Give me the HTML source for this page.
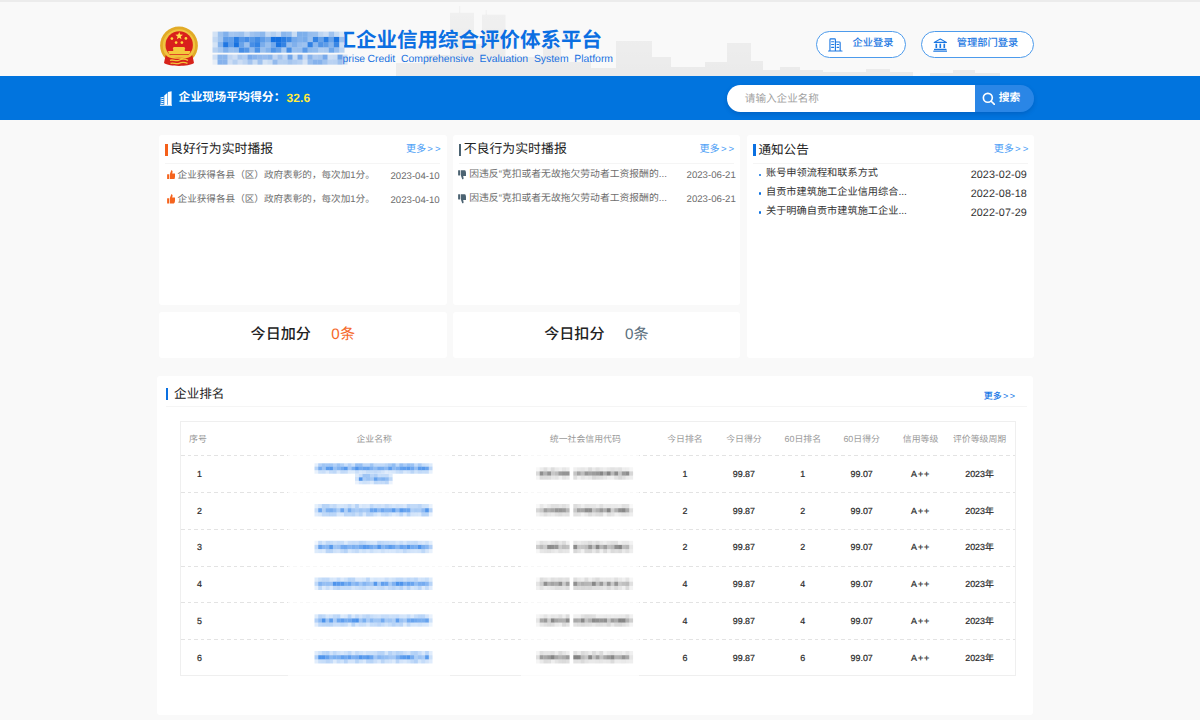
<!DOCTYPE html>
<html lang="zh-CN">
<head>
<meta charset="utf-8">
<title>Enterprise Credit Comprehensive Evaluation System Platform</title>
<style>
html,body{margin:0;padding:0}
body{width:1200px;height:720px;overflow:hidden;position:relative;background:#f9f9f9;
  font-family:"Liberation Sans",sans-serif;color:#333;font-size:9.4px;line-height:1;text-rendering:geometricPrecision}
ul{list-style:none;margin:0;padding:0}
svg{display:block}
.t{flex:none;display:inline-block;white-space:nowrap;line-height:1;font-weight:normal;font-family:"Liberation Sans","Noto Sans CJK SC",sans-serif}
.t.bd{font-weight:bold}
.t.md{font-weight:500}
svg.ic{flex:none}
svg.redact{position:absolute;pointer-events:none;filter:blur(.7px)}

/* ---------- top header ---------- */
.hd{position:absolute;left:0;top:0;width:1200px;height:76px;background:#f9f9f9;overflow:hidden}
.hd:before{content:"";position:absolute;left:0;top:0;width:100%;height:1.5px;background:#ececec}
.sky{position:absolute;left:0;top:0;width:1200px;height:76px}
.emblem{position:absolute;left:159px;top:25px;width:40px;height:42px}
.title{position:absolute;left:335.6px;top:31px;color:#0b6fe2;clip-path:inset(-2px -2px -2px 8.6px)}
.sub{position:absolute;left:342.6px;top:53.7px;font-size:10.4px;line-height:12px;color:#1871e0;white-space:nowrap;word-spacing:2.9px}
.btn{position:absolute;top:31.2px;height:26.8px;box-sizing:border-box;border:1px solid #4d9bec;border-radius:14px;
  background:#fff;display:flex;align-items:center;color:#1c78e2}
.btn svg.ic{width:14.6px;height:14px;stroke:#1c78e2;fill:none}
.b1{left:816.2px;width:89.8px;padding-left:11.2px}
.b1 .t{margin-left:9.6px}
.b2{left:920.6px;width:113.8px;padding-left:11.2px}
.b2 .t{margin-left:9.4px}

/* ---------- blue bar ---------- */
.bar{position:absolute;left:0;top:76px;width:1200px;height:44px;background:#0174de}
.score{position:absolute;left:160px;top:0;height:44px;display:flex;align-items:center;color:#fff}
.score svg.ic{width:12.4px;height:14.8px;margin-right:6.2px;margin-top:.6px}
.score b{font-size:12px;color:#ffec3d;margin-left:.9px;margin-top:.4px;letter-spacing:.1px}
.search{position:absolute;left:726.8px;top:8.8px;height:27px;width:307.6px;display:flex;border-radius:13.5px;
  box-shadow:0 2px 4px rgba(0,40,110,.22)}
.search .inp{width:248.2px;height:27px;background:#fff;border-radius:13.5px 0 0 13.5px;display:flex;align-items:center;
  padding-left:18px;padding-top:1.6px;box-sizing:border-box;color:#a2a2a2}
.search .go{flex:1;height:27px;background:#2a86e6;border-radius:0 13.5px 13.5px 0;display:flex;align-items:center;color:#fff;
  padding-left:6.6px;box-sizing:border-box}
.search .go svg.ic{width:13.6px;height:13.6px;margin-right:3.6px;margin-top:.4px}

/* ---------- panels ---------- */
.panel{position:absolute;background:#fff;border-radius:3px}
.ph{position:absolute;left:6px;right:6.6px;top:0;height:29.6px;box-sizing:border-box;padding-top:2.2px;
  border-bottom:1px solid #f5f5f5;display:flex;align-items:center;color:#222}
.ph i{display:block;width:2.7px;height:12.8px;margin-right:2.4px;flex:none;margin-top:.2px}
.more{margin-left:auto;display:flex;align-items:center;color:#4da0f6;font-size:9.6px;letter-spacing:2.1px;margin-right:-2.7px}
.more .t{margin-right:1.2px;letter-spacing:0}
.more span:not(.t){display:block;margin-top:-.2px}
.list{position:absolute;left:0;right:0}
.list li{display:flex;align-items:center;white-space:nowrap}
.list time{margin-left:auto;display:block}

.good{left:159px;top:134.5px;width:287.6px;height:170.3px}
.bad{left:452.6px;top:134.5px;width:287.6px;height:170.3px}
.good .list{top:28.9px;color:#6e6e6e}
.good .list li{height:24.3px;padding:0 6.9px 0 7.6px}
.good .list .t{margin-left:2.4px}
.good .list svg.ic{margin-top:-1.8px}
.bad .list{top:28.1px;color:#6e6e6e}
.bad .list li{height:24.3px;padding:0 4.4px 0 5.3px}
.bad .list .t{margin-left:2.8px}
.good time,.bad time{font-size:9.65px;color:#6b6b6b;margin-top:1.9px}

.notice{left:746.6px;top:134.5px;width:287.8px;height:223px}
.notice .ph{left:6.5px;right:6.6px}
.notice .ph i{width:2.8px;margin-right:2.5px}
.notice .list{top:30.4px;color:#333}
.notice .list li{height:18.8px;padding:0 7.6px 0 12.4px}
.notice .dot{display:block;width:2.3px;height:2.3px;border-radius:50%;background:#0a70e1;margin-right:4.7px;flex:none;margin-top:1px}
.notice time{font-size:10.8px;letter-spacing:.1px;margin-right:-.1px;color:#333;margin-top:3px}

.cnt{top:312px;width:287.6px;height:45.6px;display:flex;align-items:center;justify-content:center;color:#222}
.cnt .n{display:flex;align-items:center;margin-left:20.4px;font-size:15.2px}
.cnt .n .t{margin-left:.2px}
.c1{left:159px}.c1 .n{color:#f5692a}
.c2{left:452.6px}.c2 .n{color:#5b6f7d}

/* ---------- ranking ---------- */
.rank{left:156.8px;top:376.2px;width:876px;height:339px}
.rank .ph{left:9px;right:5.6px;height:30.6px;padding-top:6.8px}
.rank .ph i{width:2.6px;height:12.6px;margin-right:5.7px;margin-top:-.8px}
.rank .more{color:#1677e6;font-size:9px;letter-spacing:1.6px;margin-right:10.6px;margin-top:4.6px}
.tbl{position:absolute;left:23.2px;top:44.6px;width:836.4px;height:255.2px;box-sizing:border-box;border:1px solid #efefef}
table{border-collapse:collapse;table-layout:fixed;width:834.4px;font-size:8.9px;color:#333}
th,td{padding:0;text-align:center;font-weight:normal;vertical-align:middle}
th{height:33.5px;color:#999;padding-top:2.5px;box-sizing:border-box}
td{height:36.75px;padding-top:1.3px;box-sizing:border-box;color:#2c2c2c;-webkit-text-stroke:.22px #2c2c2c}
th .t,td .t{display:inline}
th:nth-child(1),td:nth-child(1){width:37px}
th:nth-child(2){width:312.4px}
th:nth-child(1){padding-right:3.2px}
th:nth-child(3){width:125.2px;padding-right:15.4px}
th:nth-child(n+4){width:58.9px}
th:nth-child(9){width:65.4px;padding-right:6.4px}
td:nth-child(9){padding-right:6.4px}
td.lv{letter-spacing:.9px}
.dash{position:absolute;left:0;width:100%;height:1px;
  background:repeating-linear-gradient(90deg,#e3e3e3 0,#e3e3e3 3.7px,transparent 3.7px,transparent 6.6px)}
.veil{position:absolute;background:rgba(255,255,255,.72)}
</style>
</head>
<body>

<header class="hd">
  <svg class="sky" viewBox="0 0 1200 76" aria-hidden="true" fill="url(#skyg)"><defs><linearGradient id="skyg" gradientUnits="userSpaceOnUse" x1="0" y1="6" x2="0" y2="76"><stop offset="0" stop-color="#000" stop-opacity=".035"/><stop offset="1" stop-color="#000" stop-opacity=".058"/></linearGradient></defs>
    <rect x="396" y="63" width="29" height="13"/><rect x="425" y="55" width="25" height="21"/>
    <rect x="459.200" y="6" width="1" height="7"/><rect x="450" y="12.800" width="24" height="63.200"/>
    <rect x="485.700" y="10" width="1" height="5"/><rect x="482" y="14.700" width="23.500" height="61.300"/>
    <rect x="474" y="44" width="8" height="32"/><rect x="505.500" y="57" width="37.500" height="19"/>
    <rect x="543" y="46" width="18" height="30"/><rect x="561" y="62" width="30" height="14"/>
    <rect x="591" y="68" width="25" height="8"/>
    <rect x="616" y="41" width="36" height="35"/><rect x="652" y="57" width="19" height="19"/>
    <rect x="671" y="67" width="34" height="9"/><rect x="705" y="62" width="22" height="14"/>
    <rect x="727" y="43" width="24" height="33"/><rect x="751" y="61" width="12" height="15"/>
    <rect x="763" y="70" width="60" height="6"/><rect x="780" y="67" width="20" height="3"/>
    <rect x="823" y="72" width="90" height="4"/><rect x="866" y="69" width="24" height="3"/>
    <rect x="930" y="73" width="70" height="3"/><rect x="953" y="70" width="22" height="3"/>
  </svg>
  <svg class="emblem" viewBox="0 0 40 42" role="img" aria-label="national emblem">
    <circle cx="20" cy="20.4" r="18.9" fill="#e2ab27"/>
    <circle cx="20" cy="20.4" r="16.2" fill="#f0c440"/>
    <circle cx="20.2" cy="19.9" r="13.7" fill="#d9201c"/><path d="M7.600 25.500a13.700 13.700 0 0 0 25.200 0l-1.800 4.200H9.400z" fill="#efc23c"/>
    <path d="M20.2 6.9l1 2.6 2.8.2-2.2 1.8.7 2.7-2.3-1.5-2.3 1.5.7-2.7-2.2-1.8 2.8-.2z" fill="#ffe24d"/>
    <g fill="#ffd93b"><circle cx="12.9" cy="13.6" r="1.35"/><circle cx="26.9" cy="13.4" r="1.35"/><circle cx="17.1" cy="17.6" r="1.35"/><circle cx="22.9" cy="17.6" r="1.35"/></g>
    <path d="M14.6 21.9h10.8l.9 2H13.700zM14.200 23.900h11.600v2.200H14.200zM9 26.100h22.400l-1 2.800H10z" fill="#f4c93c"/>
    <path d="M6.600 30.200c4 3.200 22.800 3.200 26.800 0l1.600 7.900c-5.500 3.800-24.500 3.800-30 0z" fill="#d7231b"/>
    <path d="M8.400 30.600c5 3.400 18.200 3.400 23.200 0M11 35.400c3-1.600 5.600 1.600 9-.2s6-1.400 9 .2M11.500 38.400c3-1.400 5.500 1.200 8.500-.1s5.500-1.300 8.500.1" fill="none" stroke="#f2c53a" stroke-width="1.3"/>
  </svg>
  <div class="title"><span class="t bd" style="font-size:20.5px;">工企业信用综合评价体系平台</span></div>
  <div class="sub"><span style="margin-right:-3.4px">prise</span> Credit Comprehensive Evaluation System Platform</div>
  <svg class="redact" style="left:0;top:0;width:360px;height:76px" viewBox="0 0 360 76"><rect x="212.5" y="31.6" width="5.33" height="5.30" fill="rgb(20,112,224)" fill-opacity="0.17"/><rect x="217.8" y="31.6" width="5.33" height="5.30" fill="rgb(20,112,224)" fill-opacity="0.40"/><rect x="223.1" y="31.6" width="5.33" height="5.30" fill="rgb(20,112,224)" fill-opacity="0.53"/><rect x="228.3" y="31.6" width="5.33" height="5.30" fill="rgb(20,112,224)" fill-opacity="0.37"/><rect x="233.6" y="31.6" width="5.33" height="5.30" fill="rgb(20,112,224)" fill-opacity="0.39"/><rect x="238.9" y="31.6" width="5.33" height="5.30" fill="rgb(20,112,224)" fill-opacity="0.41"/><rect x="244.2" y="31.6" width="5.33" height="5.30" fill="rgb(20,112,224)" fill-opacity="0.27"/><rect x="249.5" y="31.6" width="5.33" height="5.30" fill="rgb(20,112,224)" fill-opacity="0.39"/><rect x="254.7" y="31.6" width="5.33" height="5.30" fill="rgb(20,112,224)" fill-opacity="0.43"/><rect x="260.0" y="31.6" width="5.33" height="5.30" fill="rgb(20,112,224)" fill-opacity="0.48"/><rect x="265.3" y="31.6" width="5.33" height="5.30" fill="rgb(20,112,224)" fill-opacity="0.24"/><rect x="270.6" y="31.6" width="5.33" height="5.30" fill="rgb(20,112,224)" fill-opacity="0.31"/><rect x="275.9" y="31.6" width="5.33" height="5.30" fill="rgb(20,112,224)" fill-opacity="0.23"/><rect x="281.1" y="31.6" width="5.33" height="5.30" fill="rgb(20,112,224)" fill-opacity="0.49"/><rect x="286.4" y="31.6" width="5.33" height="5.30" fill="rgb(20,112,224)" fill-opacity="0.45"/><rect x="291.7" y="31.6" width="5.33" height="5.30" fill="rgb(20,112,224)" fill-opacity="0.21"/><rect x="297.0" y="31.6" width="5.33" height="5.30" fill="rgb(20,112,224)" fill-opacity="0.54"/><rect x="302.3" y="31.6" width="5.33" height="5.30" fill="rgb(20,112,224)" fill-opacity="0.54"/><rect x="307.5" y="31.6" width="5.33" height="5.30" fill="rgb(20,112,224)" fill-opacity="0.44"/><rect x="312.8" y="31.6" width="5.33" height="5.30" fill="rgb(20,112,224)" fill-opacity="0.42"/><rect x="318.1" y="31.6" width="5.33" height="5.30" fill="rgb(20,112,224)" fill-opacity="0.26"/><rect x="323.4" y="31.6" width="5.33" height="5.30" fill="rgb(20,112,224)" fill-opacity="0.20"/><rect x="328.7" y="31.6" width="5.33" height="5.30" fill="rgb(20,112,224)" fill-opacity="0.39"/><rect x="333.9" y="31.6" width="5.33" height="5.30" fill="rgb(20,112,224)" fill-opacity="0.22"/><rect x="339.2" y="31.6" width="5.33" height="5.30" fill="rgb(20,112,224)" fill-opacity="0.12"/><rect x="212.5" y="36.9" width="5.33" height="5.30" fill="rgb(20,112,224)" fill-opacity="0.24"/><rect x="217.8" y="36.9" width="5.33" height="5.30" fill="rgb(20,112,224)" fill-opacity="0.38"/><rect x="223.1" y="36.9" width="5.33" height="5.30" fill="rgb(20,112,224)" fill-opacity="0.68"/><rect x="228.3" y="36.9" width="5.33" height="5.30" fill="rgb(20,112,224)" fill-opacity="0.66"/><rect x="233.6" y="36.9" width="5.33" height="5.30" fill="rgb(20,112,224)" fill-opacity="0.91"/><rect x="238.9" y="36.9" width="5.33" height="5.30" fill="rgb(20,112,224)" fill-opacity="0.71"/><rect x="244.2" y="36.9" width="5.33" height="5.30" fill="rgb(20,112,224)" fill-opacity="0.79"/><rect x="249.5" y="36.9" width="5.33" height="5.30" fill="rgb(20,112,224)" fill-opacity="0.70"/><rect x="254.7" y="36.9" width="5.33" height="5.30" fill="rgb(20,112,224)" fill-opacity="0.80"/><rect x="260.0" y="36.9" width="5.33" height="5.30" fill="rgb(20,112,224)" fill-opacity="0.67"/><rect x="265.3" y="36.9" width="5.33" height="5.30" fill="rgb(20,112,224)" fill-opacity="0.56"/><rect x="270.6" y="36.9" width="5.33" height="5.30" fill="rgb(20,112,224)" fill-opacity="1.00"/><rect x="275.9" y="36.9" width="5.33" height="5.30" fill="rgb(20,112,224)" fill-opacity="1.00"/><rect x="281.1" y="36.9" width="5.33" height="5.30" fill="rgb(20,112,224)" fill-opacity="0.91"/><rect x="286.4" y="36.9" width="5.33" height="5.30" fill="rgb(20,112,224)" fill-opacity="0.83"/><rect x="291.7" y="36.9" width="5.33" height="5.30" fill="rgb(20,112,224)" fill-opacity="0.58"/><rect x="297.0" y="36.9" width="5.33" height="5.30" fill="rgb(20,112,224)" fill-opacity="0.52"/><rect x="302.3" y="36.9" width="5.33" height="5.30" fill="rgb(20,112,224)" fill-opacity="0.56"/><rect x="307.5" y="36.9" width="5.33" height="5.30" fill="rgb(20,112,224)" fill-opacity="0.41"/><rect x="312.8" y="36.9" width="5.33" height="5.30" fill="rgb(20,112,224)" fill-opacity="0.86"/><rect x="318.1" y="36.9" width="5.33" height="5.30" fill="rgb(20,112,224)" fill-opacity="0.64"/><rect x="323.4" y="36.9" width="5.33" height="5.30" fill="rgb(20,112,224)" fill-opacity="0.91"/><rect x="328.7" y="36.9" width="5.33" height="5.30" fill="rgb(20,112,224)" fill-opacity="0.63"/><rect x="333.9" y="36.9" width="5.33" height="5.30" fill="rgb(20,112,224)" fill-opacity="0.98"/><rect x="339.2" y="36.9" width="5.33" height="5.30" fill="rgb(20,112,224)" fill-opacity="0.41"/><rect x="212.5" y="42.1" width="5.33" height="5.30" fill="rgb(20,112,224)" fill-opacity="0.16"/><rect x="217.8" y="42.1" width="5.33" height="5.30" fill="rgb(20,112,224)" fill-opacity="0.51"/><rect x="223.1" y="42.1" width="5.33" height="5.30" fill="rgb(20,112,224)" fill-opacity="0.95"/><rect x="228.3" y="42.1" width="5.33" height="5.30" fill="rgb(20,112,224)" fill-opacity="0.68"/><rect x="233.6" y="42.1" width="5.33" height="5.30" fill="rgb(20,112,224)" fill-opacity="0.99"/><rect x="238.9" y="42.1" width="5.33" height="5.30" fill="rgb(20,112,224)" fill-opacity="0.63"/><rect x="244.2" y="42.1" width="5.33" height="5.30" fill="rgb(20,112,224)" fill-opacity="0.41"/><rect x="249.5" y="42.1" width="5.33" height="5.30" fill="rgb(20,112,224)" fill-opacity="0.78"/><rect x="254.7" y="42.1" width="5.33" height="5.30" fill="rgb(20,112,224)" fill-opacity="0.87"/><rect x="260.0" y="42.1" width="5.33" height="5.30" fill="rgb(20,112,224)" fill-opacity="0.55"/><rect x="265.3" y="42.1" width="5.33" height="5.30" fill="rgb(20,112,224)" fill-opacity="0.42"/><rect x="270.6" y="42.1" width="5.33" height="5.30" fill="rgb(20,112,224)" fill-opacity="0.59"/><rect x="275.9" y="42.1" width="5.33" height="5.30" fill="rgb(20,112,224)" fill-opacity="0.98"/><rect x="281.1" y="42.1" width="5.33" height="5.30" fill="rgb(20,112,224)" fill-opacity="0.86"/><rect x="286.4" y="42.1" width="5.33" height="5.30" fill="rgb(20,112,224)" fill-opacity="0.44"/><rect x="291.7" y="42.1" width="5.33" height="5.30" fill="rgb(20,112,224)" fill-opacity="0.53"/><rect x="297.0" y="42.1" width="5.33" height="5.30" fill="rgb(20,112,224)" fill-opacity="0.43"/><rect x="302.3" y="42.1" width="5.33" height="5.30" fill="rgb(20,112,224)" fill-opacity="0.40"/><rect x="307.5" y="42.1" width="5.33" height="5.30" fill="rgb(20,112,224)" fill-opacity="0.88"/><rect x="312.8" y="42.1" width="5.33" height="5.30" fill="rgb(20,112,224)" fill-opacity="0.49"/><rect x="318.1" y="42.1" width="5.33" height="5.30" fill="rgb(20,112,224)" fill-opacity="0.74"/><rect x="323.4" y="42.1" width="5.33" height="5.30" fill="rgb(20,112,224)" fill-opacity="0.67"/><rect x="328.7" y="42.1" width="5.33" height="5.30" fill="rgb(20,112,224)" fill-opacity="0.50"/><rect x="333.9" y="42.1" width="5.33" height="5.30" fill="rgb(20,112,224)" fill-opacity="0.84"/><rect x="339.2" y="42.1" width="5.33" height="5.30" fill="rgb(20,112,224)" fill-opacity="0.20"/><rect x="212.5" y="47.4" width="5.33" height="5.30" fill="rgb(20,112,224)" fill-opacity="0.28"/><rect x="217.8" y="47.4" width="5.33" height="5.30" fill="rgb(20,112,224)" fill-opacity="0.36"/><rect x="223.1" y="47.4" width="5.33" height="5.30" fill="rgb(20,112,224)" fill-opacity="0.52"/><rect x="228.3" y="47.4" width="5.33" height="5.30" fill="rgb(20,112,224)" fill-opacity="0.41"/><rect x="233.6" y="47.4" width="5.33" height="5.30" fill="rgb(20,112,224)" fill-opacity="0.44"/><rect x="238.9" y="47.4" width="5.33" height="5.30" fill="rgb(20,112,224)" fill-opacity="0.79"/><rect x="244.2" y="47.4" width="5.33" height="5.30" fill="rgb(20,112,224)" fill-opacity="0.71"/><rect x="249.5" y="47.4" width="5.33" height="5.30" fill="rgb(20,112,224)" fill-opacity="0.46"/><rect x="254.7" y="47.4" width="5.33" height="5.30" fill="rgb(20,112,224)" fill-opacity="0.75"/><rect x="260.0" y="47.4" width="5.33" height="5.30" fill="rgb(20,112,224)" fill-opacity="0.41"/><rect x="265.3" y="47.4" width="5.33" height="5.30" fill="rgb(20,112,224)" fill-opacity="0.51"/><rect x="270.6" y="47.4" width="5.33" height="5.30" fill="rgb(20,112,224)" fill-opacity="0.73"/><rect x="275.9" y="47.4" width="5.33" height="5.30" fill="rgb(20,112,224)" fill-opacity="0.63"/><rect x="281.1" y="47.4" width="5.33" height="5.30" fill="rgb(20,112,224)" fill-opacity="0.35"/><rect x="286.4" y="47.4" width="5.33" height="5.30" fill="rgb(20,112,224)" fill-opacity="0.79"/><rect x="291.7" y="47.4" width="5.33" height="5.30" fill="rgb(20,112,224)" fill-opacity="0.41"/><rect x="297.0" y="47.4" width="5.33" height="5.30" fill="rgb(20,112,224)" fill-opacity="0.43"/><rect x="302.3" y="47.4" width="5.33" height="5.30" fill="rgb(20,112,224)" fill-opacity="0.69"/><rect x="307.5" y="47.4" width="5.33" height="5.30" fill="rgb(20,112,224)" fill-opacity="0.47"/><rect x="312.8" y="47.4" width="5.33" height="5.30" fill="rgb(20,112,224)" fill-opacity="0.45"/><rect x="318.1" y="47.4" width="5.33" height="5.30" fill="rgb(20,112,224)" fill-opacity="0.33"/><rect x="323.4" y="47.4" width="5.33" height="5.30" fill="rgb(20,112,224)" fill-opacity="0.34"/><rect x="328.7" y="47.4" width="5.33" height="5.30" fill="rgb(20,112,224)" fill-opacity="0.60"/><rect x="333.9" y="47.4" width="5.33" height="5.30" fill="rgb(20,112,224)" fill-opacity="0.43"/><rect x="339.2" y="47.4" width="5.33" height="5.30" fill="rgb(20,112,224)" fill-opacity="0.27"/><rect x="212.5" y="54.6" width="5.05" height="5.05" fill="rgb(40,120,225)" fill-opacity="0.20"/><rect x="217.5" y="54.6" width="5.05" height="5.05" fill="rgb(40,120,225)" fill-opacity="0.53"/><rect x="222.5" y="54.6" width="5.05" height="5.05" fill="rgb(40,120,225)" fill-opacity="0.53"/><rect x="227.5" y="54.6" width="5.05" height="5.05" fill="rgb(40,120,225)" fill-opacity="0.27"/><rect x="232.5" y="54.6" width="5.05" height="5.05" fill="rgb(40,120,225)" fill-opacity="0.21"/><rect x="237.5" y="54.6" width="5.05" height="5.05" fill="rgb(40,120,225)" fill-opacity="0.39"/><rect x="242.5" y="54.6" width="5.05" height="5.05" fill="rgb(40,120,225)" fill-opacity="0.34"/><rect x="247.5" y="54.6" width="5.05" height="5.05" fill="rgb(40,120,225)" fill-opacity="0.61"/><rect x="252.5" y="54.6" width="5.05" height="5.05" fill="rgb(40,120,225)" fill-opacity="0.55"/><rect x="257.5" y="54.6" width="5.05" height="5.05" fill="rgb(40,120,225)" fill-opacity="0.50"/><rect x="262.5" y="54.6" width="5.05" height="5.05" fill="rgb(40,120,225)" fill-opacity="0.48"/><rect x="267.5" y="54.6" width="5.05" height="5.05" fill="rgb(40,120,225)" fill-opacity="0.53"/><rect x="272.5" y="54.6" width="5.05" height="5.05" fill="rgb(40,120,225)" fill-opacity="0.27"/><rect x="277.5" y="54.6" width="5.05" height="5.05" fill="rgb(40,120,225)" fill-opacity="0.42"/><rect x="282.5" y="54.6" width="5.05" height="5.05" fill="rgb(40,120,225)" fill-opacity="0.28"/><rect x="287.5" y="54.6" width="5.05" height="5.05" fill="rgb(40,120,225)" fill-opacity="0.65"/><rect x="292.5" y="54.6" width="5.05" height="5.05" fill="rgb(40,120,225)" fill-opacity="0.23"/><rect x="297.5" y="54.6" width="5.05" height="5.05" fill="rgb(40,120,225)" fill-opacity="0.61"/><rect x="302.5" y="54.6" width="5.05" height="5.05" fill="rgb(40,120,225)" fill-opacity="0.24"/><rect x="307.5" y="54.6" width="5.05" height="5.05" fill="rgb(40,120,225)" fill-opacity="0.54"/><rect x="312.5" y="54.6" width="5.05" height="5.05" fill="rgb(40,120,225)" fill-opacity="0.37"/><rect x="317.5" y="54.6" width="5.05" height="5.05" fill="rgb(40,120,225)" fill-opacity="0.40"/><rect x="322.5" y="54.6" width="5.05" height="5.05" fill="rgb(40,120,225)" fill-opacity="0.62"/><rect x="327.5" y="54.6" width="5.05" height="5.05" fill="rgb(40,120,225)" fill-opacity="0.21"/><rect x="332.5" y="54.6" width="5.05" height="5.05" fill="rgb(40,120,225)" fill-opacity="0.23"/><rect x="337.5" y="54.6" width="5.05" height="5.05" fill="rgb(40,120,225)" fill-opacity="0.66"/><rect x="342.5" y="54.6" width="5.05" height="5.05" fill="rgb(40,120,225)" fill-opacity="0.20"/><rect x="212.5" y="59.6" width="5.05" height="5.05" fill="rgb(40,120,225)" fill-opacity="0.09"/><rect x="217.5" y="59.6" width="5.05" height="5.05" fill="rgb(40,120,225)" fill-opacity="0.55"/><rect x="222.5" y="59.6" width="5.05" height="5.05" fill="rgb(40,120,225)" fill-opacity="0.54"/><rect x="227.5" y="59.6" width="5.05" height="5.05" fill="rgb(40,120,225)" fill-opacity="0.21"/><rect x="232.5" y="59.6" width="5.05" height="5.05" fill="rgb(40,120,225)" fill-opacity="0.33"/><rect x="237.5" y="59.6" width="5.05" height="5.05" fill="rgb(40,120,225)" fill-opacity="0.21"/><rect x="242.5" y="59.6" width="5.05" height="5.05" fill="rgb(40,120,225)" fill-opacity="0.29"/><rect x="247.5" y="59.6" width="5.05" height="5.05" fill="rgb(40,120,225)" fill-opacity="0.41"/><rect x="252.5" y="59.6" width="5.05" height="5.05" fill="rgb(40,120,225)" fill-opacity="0.23"/><rect x="257.5" y="59.6" width="5.05" height="5.05" fill="rgb(40,120,225)" fill-opacity="0.44"/><rect x="262.5" y="59.6" width="5.05" height="5.05" fill="rgb(40,120,225)" fill-opacity="0.18"/><rect x="267.5" y="59.6" width="5.05" height="5.05" fill="rgb(40,120,225)" fill-opacity="0.23"/><rect x="272.5" y="59.6" width="5.05" height="5.05" fill="rgb(40,120,225)" fill-opacity="0.49"/><rect x="277.5" y="59.6" width="5.05" height="5.05" fill="rgb(40,120,225)" fill-opacity="0.32"/><rect x="282.5" y="59.6" width="5.05" height="5.05" fill="rgb(40,120,225)" fill-opacity="0.33"/><rect x="287.5" y="59.6" width="5.05" height="5.05" fill="rgb(40,120,225)" fill-opacity="0.40"/><rect x="292.5" y="59.6" width="5.05" height="5.05" fill="rgb(40,120,225)" fill-opacity="0.35"/><rect x="297.5" y="59.6" width="5.05" height="5.05" fill="rgb(40,120,225)" fill-opacity="0.31"/><rect x="302.5" y="59.6" width="5.05" height="5.05" fill="rgb(40,120,225)" fill-opacity="0.17"/><rect x="307.5" y="59.6" width="5.05" height="5.05" fill="rgb(40,120,225)" fill-opacity="0.45"/><rect x="312.5" y="59.6" width="5.05" height="5.05" fill="rgb(40,120,225)" fill-opacity="0.55"/><rect x="317.5" y="59.6" width="5.05" height="5.05" fill="rgb(40,120,225)" fill-opacity="0.55"/><rect x="322.5" y="59.6" width="5.05" height="5.05" fill="rgb(40,120,225)" fill-opacity="0.43"/><rect x="327.5" y="59.6" width="5.05" height="5.05" fill="rgb(40,120,225)" fill-opacity="0.30"/><rect x="332.5" y="59.6" width="5.05" height="5.05" fill="rgb(40,120,225)" fill-opacity="0.31"/><rect x="337.5" y="59.6" width="5.05" height="5.05" fill="rgb(40,120,225)" fill-opacity="0.44"/><rect x="342.5" y="59.6" width="5.05" height="5.05" fill="rgb(40,120,225)" fill-opacity="0.19"/></svg>
  <a class="btn b1">
    <svg class="ic" viewBox="0 0 15 14" stroke-width="1.15" stroke-linecap="round" stroke-linejoin="round" aria-hidden="true">
      <path d="M2 13V1.500q0-.8.800-.8h4q.8 0 .8.800V13M7.600 3.900h4.100q.8 0 .8.800V13M.6 13.200h13.800"/>
      <path d="M3.700 3.600h2.200M3.700 6.500h2.200M3.700 9.400h2.200M9.300 6.500h1.600M9.300 9.400h1.600"/>
    </svg><span class="t md" style="font-size:10.25px;">企业登录</span></a>
  <a class="btn b2">
    <svg class="ic" viewBox="0 0 15 14" stroke-width="1.15" stroke-linecap="round" stroke-linejoin="round" aria-hidden="true">
      <path d="M7.500.8 13.800 4.300H1.200zM1.600 11.500h11.800M.8 13.300h13.400"/>
      <path d="M3.400 5.800v4.300M7.500 5.800v4.300M11.600 5.800v4.300" stroke-width="1.7" stroke-linecap="butt"/>
    </svg><span class="t md" style="font-size:10.25px;">管理部门登录</span></a>
</header>

<div class="bar">
  <div class="score">
    <svg class="ic" viewBox="0 0 12.400 14.800" fill="#fff" aria-hidden="true">
      <path d="M7.900.9 11.600.2V14H7.900zM4.300 4.500 7.300 2V14H4.300zM0 13.700h12.400v1H0z"/>
      <path d="M.5 6.600 3.700 5.800v1L.5 7.600zM.5 8.500l3.200-.7v1L.5 9.500zM.5 10.400l3.200-.6v1l-3.200.6zM.5 12.300l3.200-.5v1l-3.200.5z"/>
    </svg>
    <span class="t bd" style="font-size:11.9px;">企业现场平均得分：</span><b>32.6</b>
  </div>
  <div class="search">
    <div class="inp"><span class="t" style="font-size:10.6px;">请输入企业名称</span></div>
    <div class="go">
      <svg class="ic" viewBox="0 0 14 14" fill="none" stroke="#fff" stroke-width="1.7" stroke-linecap="round" aria-hidden="true">
        <circle cx="6" cy="6" r="4.600"/><path d="M9.500 9.500 12.800 12.800"/>
      </svg><span class="t bd" style="font-size:10.8px;">搜索</span></div>
  </div>
</div>

<main>
  <section class="panel good">
    <div class="ph"><i style="background:#f5601a"></i><span class="t" style="font-size:12.9px;">良好行为实时播报</span><a class="more"><span class="t" style="font-size:10.1px;">更多</span><span>&gt;&gt;</span></a></div>
    <ul class="list">
<li><svg class="ic" viewBox="0.4 0.8 15.4 14.8" preserveAspectRatio="none" style="width:8.6px;height:9.6px;" fill="#f5641e"><rect x="0.6" y="7.2" width="3.6" height="8.2" rx=".5"/><path d="M5.4 7.4 8.1 1c1.7-.1 2.6 1.2 2.2 2.8L9.7 6.3h4.2c1.2 0 1.9 1 1.6 2.1l-1.4 5.7c-.2.8-.8 1.3-1.6 1.3H5.4z"/></svg><span class="t lt" style="font-size:9.6px;">企业获得各县（区）政府表彰的，每次加1分。</span><time>2023-04-10</time></li>
<li><svg class="ic" viewBox="0.4 0.8 15.4 14.8" preserveAspectRatio="none" style="width:8.6px;height:9.6px;" fill="#f5641e"><rect x="0.6" y="7.2" width="3.6" height="8.2" rx=".5"/><path d="M5.4 7.4 8.1 1c1.7-.1 2.6 1.2 2.2 2.8L9.7 6.3h4.2c1.2 0 1.9 1 1.6 2.1l-1.4 5.7c-.2.8-.8 1.3-1.6 1.3H5.4z"/></svg><span class="t lt" style="font-size:9.6px;">企业获得各县（区）政府表彰的，每次加1分。</span><time>2023-04-10</time></li>
    </ul>
  </section>
  <section class="panel bad">
    <div class="ph"><i style="background:#4c6372"></i><span class="t" style="font-size:12.9px;">不良行为实时播报</span><a class="more"><span class="t" style="font-size:10.1px;">更多</span><span>&gt;&gt;</span></a></div>
    <ul class="list">
<li><svg class="ic" viewBox="0.4 0.8 15.4 14.8" preserveAspectRatio="none" style="width:8.6px;height:9.6px;transform:scaleY(-1);" fill="#4c6372"><rect x="0.6" y="7.2" width="3.6" height="8.2" rx=".5"/><path d="M5.4 7.4 8.1 1c1.7-.1 2.6 1.2 2.2 2.8L9.7 6.3h4.2c1.2 0 1.9 1 1.6 2.1l-1.4 5.7c-.2.8-.8 1.3-1.6 1.3H5.4z"/></svg><span class="t lt" style="font-size:9.8px;">因违反“克扣或者无故拖欠劳动者工资报酬的...</span><time>2023-06-21</time></li>
<li><svg class="ic" viewBox="0.4 0.8 15.4 14.8" preserveAspectRatio="none" style="width:8.6px;height:9.6px;transform:scaleY(-1);" fill="#4c6372"><rect x="0.6" y="7.2" width="3.6" height="8.2" rx=".5"/><path d="M5.4 7.4 8.1 1c1.7-.1 2.6 1.2 2.2 2.8L9.7 6.3h4.2c1.2 0 1.9 1 1.6 2.1l-1.4 5.7c-.2.8-.8 1.3-1.6 1.3H5.4z"/></svg><span class="t lt" style="font-size:9.8px;">因违反“克扣或者无故拖欠劳动者工资报酬的...</span><time>2023-06-21</time></li>
    </ul>
  </section>
  <section class="panel notice">
    <div class="ph"><i style="background:#0a70e1"></i><span class="t" style="font-size:12.6px;">通知公告</span><a class="more"><span class="t" style="font-size:10.1px;">更多</span><span>&gt;&gt;</span></a></div>
    <ul class="list">
<li><i class="dot"></i><span class="t lt" style="font-size:10.2px;">账号申领流程和联系方式</span><time>2023-02-09</time></li>
<li><i class="dot"></i><span class="t lt" style="font-size:10.2px;">自贡市建筑施工企业信用综合...</span><time>2022-08-18</time></li>
<li><i class="dot"></i><span class="t lt" style="font-size:10.2px;">关于明确自贡市建筑施工企业...</span><time>2022-07-29</time></li>
    </ul>
  </section>
  <section class="panel cnt c1"><span class="t md" style="font-size:15.1px;">今日加分</span><span class="n">0<span class="t" style="font-size:15.1px;">条</span></span></section>
  <section class="panel cnt c2"><span class="t md" style="font-size:15.1px;">今日扣分</span><span class="n">0<span class="t" style="font-size:15.1px;">条</span></span></section>

  <section class="panel rank">
    <div class="ph"><i style="background:#0a70e1"></i><span class="t" style="font-size:12.6px;">企业排名</span><a class="more"><span class="t md" style="font-size:9px;">更多</span><span>&gt;&gt;</span></a></div>
    <div class="tbl">
      <table><thead><tr><th><span class="t" style="font-size:8.9px;">序号</span></th><th><span class="t" style="font-size:8.9px;">企业名称</span></th><th><span class="t" style="font-size:8.9px;">统一社会信用代码</span></th><th><span class="t" style="font-size:8.9px;">今日排名</span></th><th><span class="t" style="font-size:8.9px;">今日得分</span></th><th><span class="t" style="font-size:8.9px;">60日排名</span></th><th><span class="t" style="font-size:8.9px;">60日得分</span></th><th><span class="t" style="font-size:8.9px;">信用等级</span></th><th><span class="t" style="font-size:8.9px;">评价等级周期</span></th></tr></thead><tbody><tr><td>1</td><td></td><td></td><td>1</td><td>99.87</td><td>1</td><td>99.07</td><td class="lv">A++</td><td>2023<span class="t" style="font-size:8.9px;">年</span></td></tr>
<tr><td>2</td><td></td><td></td><td>2</td><td>99.87</td><td>2</td><td>99.07</td><td class="lv">A++</td><td>2023<span class="t" style="font-size:8.9px;">年</span></td></tr>
<tr><td>3</td><td></td><td></td><td>2</td><td>99.87</td><td>2</td><td>99.07</td><td class="lv">A++</td><td>2023<span class="t" style="font-size:8.9px;">年</span></td></tr>
<tr><td>4</td><td></td><td></td><td>4</td><td>99.87</td><td>4</td><td>99.07</td><td class="lv">A++</td><td>2023<span class="t" style="font-size:8.9px;">年</span></td></tr>
<tr><td>5</td><td></td><td></td><td>4</td><td>99.87</td><td>4</td><td>99.07</td><td class="lv">A++</td><td>2023<span class="t" style="font-size:8.9px;">年</span></td></tr>
<tr><td>6</td><td></td><td></td><td>6</td><td>99.87</td><td>6</td><td>99.07</td><td class="lv">A++</td><td>2023<span class="t" style="font-size:8.9px;">年</span></td></tr></tbody></table>
      <div class="dash" style="top:33.5px"></div><div class="dash" style="top:70.25px"></div>
      <div class="dash" style="top:107px"></div><div class="dash" style="top:143.75px"></div>
      <div class="dash" style="top:180.5px"></div><div class="dash" style="top:217.25px"></div>
      <div class="veil" style="left:107px;top:30px;width:162px;height:226px"></div>
      <div class="veil" style="left:340px;top:30px;width:118px;height:226px"></div>
    </div>
  </section>
</main>
<svg class="redact" style="left:0;top:0;width:1200px;height:720px" viewBox="0 0 1200 720"><rect x="314.5" y="463.3" width="3.74" height="3.52" fill="rgb(45,128,232)" fill-opacity="0.13"/><rect x="318.2" y="463.3" width="3.74" height="3.52" fill="rgb(45,128,232)" fill-opacity="0.37"/><rect x="321.9" y="463.3" width="3.74" height="3.52" fill="rgb(45,128,232)" fill-opacity="0.46"/><rect x="325.6" y="463.3" width="3.74" height="3.52" fill="rgb(45,128,232)" fill-opacity="0.44"/><rect x="329.2" y="463.3" width="3.74" height="3.52" fill="rgb(45,128,232)" fill-opacity="0.45"/><rect x="332.9" y="463.3" width="3.74" height="3.52" fill="rgb(45,128,232)" fill-opacity="0.36"/><rect x="336.6" y="463.3" width="3.74" height="3.52" fill="rgb(45,128,232)" fill-opacity="0.47"/><rect x="340.3" y="463.3" width="3.74" height="3.52" fill="rgb(45,128,232)" fill-opacity="0.39"/><rect x="344.0" y="463.3" width="3.74" height="3.52" fill="rgb(45,128,232)" fill-opacity="0.26"/><rect x="347.7" y="463.3" width="3.74" height="3.52" fill="rgb(45,128,232)" fill-opacity="0.37"/><rect x="351.4" y="463.3" width="3.74" height="3.52" fill="rgb(45,128,232)" fill-opacity="0.25"/><rect x="355.1" y="463.3" width="3.74" height="3.52" fill="rgb(45,128,232)" fill-opacity="0.51"/><rect x="358.8" y="463.3" width="3.74" height="3.52" fill="rgb(45,128,232)" fill-opacity="0.51"/><rect x="362.4" y="463.3" width="3.74" height="3.52" fill="rgb(45,128,232)" fill-opacity="0.33"/><rect x="366.1" y="463.3" width="3.74" height="3.52" fill="rgb(45,128,232)" fill-opacity="0.33"/><rect x="369.8" y="463.3" width="3.74" height="3.52" fill="rgb(45,128,232)" fill-opacity="0.46"/><rect x="373.5" y="463.3" width="3.74" height="3.52" fill="rgb(45,128,232)" fill-opacity="0.30"/><rect x="377.2" y="463.3" width="3.74" height="3.52" fill="rgb(45,128,232)" fill-opacity="0.29"/><rect x="380.9" y="463.3" width="3.74" height="3.52" fill="rgb(45,128,232)" fill-opacity="0.29"/><rect x="384.6" y="463.3" width="3.74" height="3.52" fill="rgb(45,128,232)" fill-opacity="0.34"/><rect x="388.2" y="463.3" width="3.74" height="3.52" fill="rgb(45,128,232)" fill-opacity="0.42"/><rect x="391.9" y="463.3" width="3.74" height="3.52" fill="rgb(45,128,232)" fill-opacity="0.52"/><rect x="395.6" y="463.3" width="3.74" height="3.52" fill="rgb(45,128,232)" fill-opacity="0.30"/><rect x="399.3" y="463.3" width="3.74" height="3.52" fill="rgb(45,128,232)" fill-opacity="0.51"/><rect x="403.0" y="463.3" width="3.74" height="3.52" fill="rgb(45,128,232)" fill-opacity="0.40"/><rect x="406.7" y="463.3" width="3.74" height="3.52" fill="rgb(45,128,232)" fill-opacity="0.50"/><rect x="410.4" y="463.3" width="3.74" height="3.52" fill="rgb(45,128,232)" fill-opacity="0.47"/><rect x="414.1" y="463.3" width="3.74" height="3.52" fill="rgb(45,128,232)" fill-opacity="0.28"/><rect x="417.8" y="463.3" width="3.74" height="3.52" fill="rgb(45,128,232)" fill-opacity="0.42"/><rect x="421.4" y="463.3" width="3.74" height="3.52" fill="rgb(45,128,232)" fill-opacity="0.27"/><rect x="425.1" y="463.3" width="3.74" height="3.52" fill="rgb(45,128,232)" fill-opacity="0.24"/><rect x="428.8" y="463.3" width="3.74" height="3.52" fill="rgb(45,128,232)" fill-opacity="0.16"/><rect x="314.5" y="466.7" width="3.74" height="3.52" fill="rgb(45,128,232)" fill-opacity="0.33"/><rect x="318.2" y="466.7" width="3.74" height="3.52" fill="rgb(45,128,232)" fill-opacity="0.65"/><rect x="321.9" y="466.7" width="3.74" height="3.52" fill="rgb(45,128,232)" fill-opacity="0.47"/><rect x="325.6" y="466.7" width="3.74" height="3.52" fill="rgb(45,128,232)" fill-opacity="0.78"/><rect x="329.2" y="466.7" width="3.74" height="3.52" fill="rgb(45,128,232)" fill-opacity="0.81"/><rect x="332.9" y="466.7" width="3.74" height="3.52" fill="rgb(45,128,232)" fill-opacity="0.49"/><rect x="336.6" y="466.7" width="3.74" height="3.52" fill="rgb(45,128,232)" fill-opacity="0.59"/><rect x="340.3" y="466.7" width="3.74" height="3.52" fill="rgb(45,128,232)" fill-opacity="0.68"/><rect x="344.0" y="466.7" width="3.74" height="3.52" fill="rgb(45,128,232)" fill-opacity="0.80"/><rect x="347.7" y="466.7" width="3.74" height="3.52" fill="rgb(45,128,232)" fill-opacity="0.44"/><rect x="351.4" y="466.7" width="3.74" height="3.52" fill="rgb(45,128,232)" fill-opacity="0.64"/><rect x="355.1" y="466.7" width="3.74" height="3.52" fill="rgb(45,128,232)" fill-opacity="0.84"/><rect x="358.8" y="466.7" width="3.74" height="3.52" fill="rgb(45,128,232)" fill-opacity="0.67"/><rect x="362.4" y="466.7" width="3.74" height="3.52" fill="rgb(45,128,232)" fill-opacity="0.72"/><rect x="366.1" y="466.7" width="3.74" height="3.52" fill="rgb(45,128,232)" fill-opacity="0.74"/><rect x="369.8" y="466.7" width="3.74" height="3.52" fill="rgb(45,128,232)" fill-opacity="0.62"/><rect x="373.5" y="466.7" width="3.74" height="3.52" fill="rgb(45,128,232)" fill-opacity="0.52"/><rect x="377.2" y="466.7" width="3.74" height="3.52" fill="rgb(45,128,232)" fill-opacity="0.66"/><rect x="380.9" y="466.7" width="3.74" height="3.52" fill="rgb(45,128,232)" fill-opacity="0.63"/><rect x="384.6" y="466.7" width="3.74" height="3.52" fill="rgb(45,128,232)" fill-opacity="0.54"/><rect x="388.2" y="466.7" width="3.74" height="3.52" fill="rgb(45,128,232)" fill-opacity="0.78"/><rect x="391.9" y="466.7" width="3.74" height="3.52" fill="rgb(45,128,232)" fill-opacity="0.55"/><rect x="395.6" y="466.7" width="3.74" height="3.52" fill="rgb(45,128,232)" fill-opacity="0.61"/><rect x="399.3" y="466.7" width="3.74" height="3.52" fill="rgb(45,128,232)" fill-opacity="0.74"/><rect x="403.0" y="466.7" width="3.74" height="3.52" fill="rgb(45,128,232)" fill-opacity="0.76"/><rect x="406.7" y="466.7" width="3.74" height="3.52" fill="rgb(45,128,232)" fill-opacity="0.80"/><rect x="410.4" y="466.7" width="3.74" height="3.52" fill="rgb(45,128,232)" fill-opacity="0.69"/><rect x="414.1" y="466.7" width="3.74" height="3.52" fill="rgb(45,128,232)" fill-opacity="0.50"/><rect x="417.8" y="466.7" width="3.74" height="3.52" fill="rgb(45,128,232)" fill-opacity="0.78"/><rect x="421.4" y="466.7" width="3.74" height="3.52" fill="rgb(45,128,232)" fill-opacity="0.81"/><rect x="425.1" y="466.7" width="3.74" height="3.52" fill="rgb(45,128,232)" fill-opacity="0.72"/><rect x="428.8" y="466.7" width="3.74" height="3.52" fill="rgb(45,128,232)" fill-opacity="0.33"/><rect x="314.5" y="470.2" width="3.74" height="3.52" fill="rgb(45,128,232)" fill-opacity="0.11"/><rect x="318.2" y="470.2" width="3.74" height="3.52" fill="rgb(45,128,232)" fill-opacity="0.24"/><rect x="321.9" y="470.2" width="3.74" height="3.52" fill="rgb(45,128,232)" fill-opacity="0.26"/><rect x="325.6" y="470.2" width="3.74" height="3.52" fill="rgb(45,128,232)" fill-opacity="0.18"/><rect x="329.2" y="470.2" width="3.74" height="3.52" fill="rgb(45,128,232)" fill-opacity="0.28"/><rect x="332.9" y="470.2" width="3.74" height="3.52" fill="rgb(45,128,232)" fill-opacity="0.31"/><rect x="336.6" y="470.2" width="3.74" height="3.52" fill="rgb(45,128,232)" fill-opacity="0.18"/><rect x="340.3" y="470.2" width="3.74" height="3.52" fill="rgb(45,128,232)" fill-opacity="0.29"/><rect x="344.0" y="470.2" width="3.74" height="3.52" fill="rgb(45,128,232)" fill-opacity="0.28"/><rect x="347.7" y="470.2" width="3.74" height="3.52" fill="rgb(45,128,232)" fill-opacity="0.17"/><rect x="351.4" y="470.2" width="3.74" height="3.52" fill="rgb(45,128,232)" fill-opacity="0.16"/><rect x="355.1" y="470.2" width="3.74" height="3.52" fill="rgb(45,128,232)" fill-opacity="0.26"/><rect x="358.8" y="470.2" width="3.74" height="3.52" fill="rgb(45,128,232)" fill-opacity="0.19"/><rect x="362.4" y="470.2" width="3.74" height="3.52" fill="rgb(45,128,232)" fill-opacity="0.21"/><rect x="366.1" y="470.2" width="3.74" height="3.52" fill="rgb(45,128,232)" fill-opacity="0.27"/><rect x="369.8" y="470.2" width="3.74" height="3.52" fill="rgb(45,128,232)" fill-opacity="0.27"/><rect x="373.5" y="470.2" width="3.74" height="3.52" fill="rgb(45,128,232)" fill-opacity="0.29"/><rect x="377.2" y="470.2" width="3.74" height="3.52" fill="rgb(45,128,232)" fill-opacity="0.26"/><rect x="380.9" y="470.2" width="3.74" height="3.52" fill="rgb(45,128,232)" fill-opacity="0.21"/><rect x="384.6" y="470.2" width="3.74" height="3.52" fill="rgb(45,128,232)" fill-opacity="0.15"/><rect x="388.2" y="470.2" width="3.74" height="3.52" fill="rgb(45,128,232)" fill-opacity="0.17"/><rect x="391.9" y="470.2" width="3.74" height="3.52" fill="rgb(45,128,232)" fill-opacity="0.19"/><rect x="395.6" y="470.2" width="3.74" height="3.52" fill="rgb(45,128,232)" fill-opacity="0.25"/><rect x="399.3" y="470.2" width="3.74" height="3.52" fill="rgb(45,128,232)" fill-opacity="0.29"/><rect x="403.0" y="470.2" width="3.74" height="3.52" fill="rgb(45,128,232)" fill-opacity="0.19"/><rect x="406.7" y="470.2" width="3.74" height="3.52" fill="rgb(45,128,232)" fill-opacity="0.23"/><rect x="410.4" y="470.2" width="3.74" height="3.52" fill="rgb(45,128,232)" fill-opacity="0.33"/><rect x="414.1" y="470.2" width="3.74" height="3.52" fill="rgb(45,128,232)" fill-opacity="0.23"/><rect x="417.8" y="470.2" width="3.74" height="3.52" fill="rgb(45,128,232)" fill-opacity="0.29"/><rect x="421.4" y="470.2" width="3.74" height="3.52" fill="rgb(45,128,232)" fill-opacity="0.27"/><rect x="425.1" y="470.2" width="3.74" height="3.52" fill="rgb(45,128,232)" fill-opacity="0.28"/><rect x="428.8" y="470.2" width="3.74" height="3.52" fill="rgb(45,128,232)" fill-opacity="0.11"/><rect x="355.0" y="473.9" width="3.80" height="3.52" fill="rgb(45,128,232)" fill-opacity="0.16"/><rect x="358.8" y="473.9" width="3.80" height="3.52" fill="rgb(45,128,232)" fill-opacity="0.26"/><rect x="362.5" y="473.9" width="3.80" height="3.52" fill="rgb(45,128,232)" fill-opacity="0.46"/><rect x="366.2" y="473.9" width="3.80" height="3.52" fill="rgb(45,128,232)" fill-opacity="0.45"/><rect x="370.0" y="473.9" width="3.80" height="3.52" fill="rgb(45,128,232)" fill-opacity="0.33"/><rect x="373.8" y="473.9" width="3.80" height="3.52" fill="rgb(45,128,232)" fill-opacity="0.38"/><rect x="377.5" y="473.9" width="3.80" height="3.52" fill="rgb(45,128,232)" fill-opacity="0.26"/><rect x="381.2" y="473.9" width="3.80" height="3.52" fill="rgb(45,128,232)" fill-opacity="0.27"/><rect x="385.0" y="473.9" width="3.80" height="3.52" fill="rgb(45,128,232)" fill-opacity="0.28"/><rect x="388.8" y="473.9" width="3.80" height="3.52" fill="rgb(45,128,232)" fill-opacity="0.17"/><rect x="355.0" y="477.3" width="3.80" height="3.52" fill="rgb(45,128,232)" fill-opacity="0.22"/><rect x="358.8" y="477.3" width="3.80" height="3.52" fill="rgb(45,128,232)" fill-opacity="0.84"/><rect x="362.5" y="477.3" width="3.80" height="3.52" fill="rgb(45,128,232)" fill-opacity="0.41"/><rect x="366.2" y="477.3" width="3.80" height="3.52" fill="rgb(45,128,232)" fill-opacity="0.47"/><rect x="370.0" y="477.3" width="3.80" height="3.52" fill="rgb(45,128,232)" fill-opacity="0.42"/><rect x="373.8" y="477.3" width="3.80" height="3.52" fill="rgb(45,128,232)" fill-opacity="0.74"/><rect x="377.5" y="477.3" width="3.80" height="3.52" fill="rgb(45,128,232)" fill-opacity="0.55"/><rect x="381.2" y="477.3" width="3.80" height="3.52" fill="rgb(45,128,232)" fill-opacity="0.60"/><rect x="385.0" y="477.3" width="3.80" height="3.52" fill="rgb(45,128,232)" fill-opacity="0.53"/><rect x="388.8" y="477.3" width="3.80" height="3.52" fill="rgb(45,128,232)" fill-opacity="0.31"/><rect x="355.0" y="480.8" width="3.80" height="3.52" fill="rgb(45,128,232)" fill-opacity="0.10"/><rect x="358.8" y="480.8" width="3.80" height="3.52" fill="rgb(45,128,232)" fill-opacity="0.19"/><rect x="362.5" y="480.8" width="3.80" height="3.52" fill="rgb(45,128,232)" fill-opacity="0.23"/><rect x="366.2" y="480.8" width="3.80" height="3.52" fill="rgb(45,128,232)" fill-opacity="0.21"/><rect x="370.0" y="480.8" width="3.80" height="3.52" fill="rgb(45,128,232)" fill-opacity="0.17"/><rect x="373.8" y="480.8" width="3.80" height="3.52" fill="rgb(45,128,232)" fill-opacity="0.31"/><rect x="377.5" y="480.8" width="3.80" height="3.52" fill="rgb(45,128,232)" fill-opacity="0.28"/><rect x="381.2" y="480.8" width="3.80" height="3.52" fill="rgb(45,128,232)" fill-opacity="0.28"/><rect x="385.0" y="480.8" width="3.80" height="3.52" fill="rgb(45,128,232)" fill-opacity="0.32"/><rect x="388.8" y="480.8" width="3.80" height="3.52" fill="rgb(45,128,232)" fill-opacity="0.10"/><rect x="536.0" y="467.3" width="3.78" height="4.18" fill="rgb(85,85,85)" fill-opacity="0.04"/><rect x="539.7" y="467.3" width="3.78" height="4.18" fill="rgb(85,85,85)" fill-opacity="0.11"/><rect x="543.5" y="467.3" width="3.78" height="4.18" fill="rgb(85,85,85)" fill-opacity="0.18"/><rect x="547.2" y="467.3" width="3.78" height="4.18" fill="rgb(85,85,85)" fill-opacity="0.10"/><rect x="550.9" y="467.3" width="3.78" height="4.18" fill="rgb(85,85,85)" fill-opacity="0.20"/><rect x="554.7" y="467.3" width="3.78" height="4.18" fill="rgb(85,85,85)" fill-opacity="0.12"/><rect x="558.4" y="467.3" width="3.78" height="4.18" fill="rgb(85,85,85)" fill-opacity="0.09"/><rect x="562.1" y="467.3" width="3.78" height="4.18" fill="rgb(85,85,85)" fill-opacity="0.14"/><rect x="565.8" y="467.3" width="3.78" height="4.18" fill="rgb(85,85,85)" fill-opacity="0.11"/><rect x="573.3" y="467.3" width="3.78" height="4.18" fill="rgb(85,85,85)" fill-opacity="0.09"/><rect x="577.0" y="467.3" width="3.78" height="4.18" fill="rgb(85,85,85)" fill-opacity="0.12"/><rect x="580.8" y="467.3" width="3.78" height="4.18" fill="rgb(85,85,85)" fill-opacity="0.14"/><rect x="584.5" y="467.3" width="3.78" height="4.18" fill="rgb(85,85,85)" fill-opacity="0.11"/><rect x="588.2" y="467.3" width="3.78" height="4.18" fill="rgb(85,85,85)" fill-opacity="0.20"/><rect x="592.0" y="467.3" width="3.78" height="4.18" fill="rgb(85,85,85)" fill-opacity="0.12"/><rect x="595.7" y="467.3" width="3.78" height="4.18" fill="rgb(85,85,85)" fill-opacity="0.18"/><rect x="599.4" y="467.3" width="3.78" height="4.18" fill="rgb(85,85,85)" fill-opacity="0.13"/><rect x="603.2" y="467.3" width="3.78" height="4.18" fill="rgb(85,85,85)" fill-opacity="0.10"/><rect x="606.9" y="467.3" width="3.78" height="4.18" fill="rgb(85,85,85)" fill-opacity="0.14"/><rect x="610.6" y="467.3" width="3.78" height="4.18" fill="rgb(85,85,85)" fill-opacity="0.17"/><rect x="614.3" y="467.3" width="3.78" height="4.18" fill="rgb(85,85,85)" fill-opacity="0.15"/><rect x="618.1" y="467.3" width="3.78" height="4.18" fill="rgb(85,85,85)" fill-opacity="0.17"/><rect x="621.8" y="467.3" width="3.78" height="4.18" fill="rgb(85,85,85)" fill-opacity="0.10"/><rect x="625.5" y="467.3" width="3.78" height="4.18" fill="rgb(85,85,85)" fill-opacity="0.10"/><rect x="629.3" y="467.3" width="3.78" height="4.18" fill="rgb(85,85,85)" fill-opacity="0.05"/><rect x="536.0" y="471.4" width="3.78" height="4.18" fill="rgb(85,85,85)" fill-opacity="0.22"/><rect x="539.7" y="471.4" width="3.78" height="4.18" fill="rgb(85,85,85)" fill-opacity="0.66"/><rect x="543.5" y="471.4" width="3.78" height="4.18" fill="rgb(85,85,85)" fill-opacity="0.45"/><rect x="547.2" y="471.4" width="3.78" height="4.18" fill="rgb(85,85,85)" fill-opacity="0.64"/><rect x="550.9" y="471.4" width="3.78" height="4.18" fill="rgb(85,85,85)" fill-opacity="0.33"/><rect x="554.7" y="471.4" width="3.78" height="4.18" fill="rgb(85,85,85)" fill-opacity="0.38"/><rect x="558.4" y="471.4" width="3.78" height="4.18" fill="rgb(85,85,85)" fill-opacity="0.58"/><rect x="562.1" y="471.4" width="3.78" height="4.18" fill="rgb(85,85,85)" fill-opacity="0.63"/><rect x="565.8" y="471.4" width="3.78" height="4.18" fill="rgb(85,85,85)" fill-opacity="0.63"/><rect x="573.3" y="471.4" width="3.78" height="4.18" fill="rgb(85,85,85)" fill-opacity="0.34"/><rect x="577.0" y="471.4" width="3.78" height="4.18" fill="rgb(85,85,85)" fill-opacity="0.52"/><rect x="580.8" y="471.4" width="3.78" height="4.18" fill="rgb(85,85,85)" fill-opacity="0.38"/><rect x="584.5" y="471.4" width="3.78" height="4.18" fill="rgb(85,85,85)" fill-opacity="0.61"/><rect x="588.2" y="471.4" width="3.78" height="4.18" fill="rgb(85,85,85)" fill-opacity="0.54"/><rect x="592.0" y="471.4" width="3.78" height="4.18" fill="rgb(85,85,85)" fill-opacity="0.58"/><rect x="595.7" y="471.4" width="3.78" height="4.18" fill="rgb(85,85,85)" fill-opacity="0.62"/><rect x="599.4" y="471.4" width="3.78" height="4.18" fill="rgb(85,85,85)" fill-opacity="0.71"/><rect x="603.2" y="471.4" width="3.78" height="4.18" fill="rgb(85,85,85)" fill-opacity="0.49"/><rect x="606.9" y="471.4" width="3.78" height="4.18" fill="rgb(85,85,85)" fill-opacity="0.72"/><rect x="610.6" y="471.4" width="3.78" height="4.18" fill="rgb(85,85,85)" fill-opacity="0.41"/><rect x="614.3" y="471.4" width="3.78" height="4.18" fill="rgb(85,85,85)" fill-opacity="0.67"/><rect x="618.1" y="471.4" width="3.78" height="4.18" fill="rgb(85,85,85)" fill-opacity="0.33"/><rect x="621.8" y="471.4" width="3.78" height="4.18" fill="rgb(85,85,85)" fill-opacity="0.60"/><rect x="625.5" y="471.4" width="3.78" height="4.18" fill="rgb(85,85,85)" fill-opacity="0.67"/><rect x="629.3" y="471.4" width="3.78" height="4.18" fill="rgb(85,85,85)" fill-opacity="0.24"/><rect x="536.0" y="475.5" width="3.78" height="4.18" fill="rgb(85,85,85)" fill-opacity="0.06"/><rect x="539.7" y="475.5" width="3.78" height="4.18" fill="rgb(85,85,85)" fill-opacity="0.21"/><rect x="543.5" y="475.5" width="3.78" height="4.18" fill="rgb(85,85,85)" fill-opacity="0.20"/><rect x="547.2" y="475.5" width="3.78" height="4.18" fill="rgb(85,85,85)" fill-opacity="0.19"/><rect x="550.9" y="475.5" width="3.78" height="4.18" fill="rgb(85,85,85)" fill-opacity="0.14"/><rect x="554.7" y="475.5" width="3.78" height="4.18" fill="rgb(85,85,85)" fill-opacity="0.16"/><rect x="558.4" y="475.5" width="3.78" height="4.18" fill="rgb(85,85,85)" fill-opacity="0.09"/><rect x="562.1" y="475.5" width="3.78" height="4.18" fill="rgb(85,85,85)" fill-opacity="0.16"/><rect x="565.8" y="475.5" width="3.78" height="4.18" fill="rgb(85,85,85)" fill-opacity="0.13"/><rect x="573.3" y="475.5" width="3.78" height="4.18" fill="rgb(85,85,85)" fill-opacity="0.18"/><rect x="577.0" y="475.5" width="3.78" height="4.18" fill="rgb(85,85,85)" fill-opacity="0.09"/><rect x="580.8" y="475.5" width="3.78" height="4.18" fill="rgb(85,85,85)" fill-opacity="0.15"/><rect x="584.5" y="475.5" width="3.78" height="4.18" fill="rgb(85,85,85)" fill-opacity="0.11"/><rect x="588.2" y="475.5" width="3.78" height="4.18" fill="rgb(85,85,85)" fill-opacity="0.14"/><rect x="592.0" y="475.5" width="3.78" height="4.18" fill="rgb(85,85,85)" fill-opacity="0.23"/><rect x="595.7" y="475.5" width="3.78" height="4.18" fill="rgb(85,85,85)" fill-opacity="0.20"/><rect x="599.4" y="475.5" width="3.78" height="4.18" fill="rgb(85,85,85)" fill-opacity="0.18"/><rect x="603.2" y="475.5" width="3.78" height="4.18" fill="rgb(85,85,85)" fill-opacity="0.14"/><rect x="606.9" y="475.5" width="3.78" height="4.18" fill="rgb(85,85,85)" fill-opacity="0.10"/><rect x="610.6" y="475.5" width="3.78" height="4.18" fill="rgb(85,85,85)" fill-opacity="0.09"/><rect x="614.3" y="475.5" width="3.78" height="4.18" fill="rgb(85,85,85)" fill-opacity="0.17"/><rect x="618.1" y="475.5" width="3.78" height="4.18" fill="rgb(85,85,85)" fill-opacity="0.23"/><rect x="621.8" y="475.5" width="3.78" height="4.18" fill="rgb(85,85,85)" fill-opacity="0.19"/><rect x="625.5" y="475.5" width="3.78" height="4.18" fill="rgb(85,85,85)" fill-opacity="0.12"/><rect x="629.3" y="475.5" width="3.78" height="4.18" fill="rgb(85,85,85)" fill-opacity="0.10"/><rect x="314.5" y="504.0" width="3.74" height="4.18" fill="rgb(45,128,232)" fill-opacity="0.12"/><rect x="318.2" y="504.0" width="3.74" height="4.18" fill="rgb(45,128,232)" fill-opacity="0.20"/><rect x="321.9" y="504.0" width="3.74" height="4.18" fill="rgb(45,128,232)" fill-opacity="0.35"/><rect x="325.6" y="504.0" width="3.74" height="4.18" fill="rgb(45,128,232)" fill-opacity="0.34"/><rect x="329.2" y="504.0" width="3.74" height="4.18" fill="rgb(45,128,232)" fill-opacity="0.25"/><rect x="332.9" y="504.0" width="3.74" height="4.18" fill="rgb(45,128,232)" fill-opacity="0.29"/><rect x="336.6" y="504.0" width="3.74" height="4.18" fill="rgb(45,128,232)" fill-opacity="0.20"/><rect x="340.3" y="504.0" width="3.74" height="4.18" fill="rgb(45,128,232)" fill-opacity="0.20"/><rect x="344.0" y="504.0" width="3.74" height="4.18" fill="rgb(45,128,232)" fill-opacity="0.22"/><rect x="347.7" y="504.0" width="3.74" height="4.18" fill="rgb(45,128,232)" fill-opacity="0.30"/><rect x="351.4" y="504.0" width="3.74" height="4.18" fill="rgb(45,128,232)" fill-opacity="0.20"/><rect x="355.1" y="504.0" width="3.74" height="4.18" fill="rgb(45,128,232)" fill-opacity="0.35"/><rect x="358.8" y="504.0" width="3.74" height="4.18" fill="rgb(45,128,232)" fill-opacity="0.17"/><rect x="362.4" y="504.0" width="3.74" height="4.18" fill="rgb(45,128,232)" fill-opacity="0.20"/><rect x="366.1" y="504.0" width="3.74" height="4.18" fill="rgb(45,128,232)" fill-opacity="0.18"/><rect x="369.8" y="504.0" width="3.74" height="4.18" fill="rgb(45,128,232)" fill-opacity="0.31"/><rect x="373.5" y="504.0" width="3.74" height="4.18" fill="rgb(45,128,232)" fill-opacity="0.23"/><rect x="377.2" y="504.0" width="3.74" height="4.18" fill="rgb(45,128,232)" fill-opacity="0.25"/><rect x="380.9" y="504.0" width="3.74" height="4.18" fill="rgb(45,128,232)" fill-opacity="0.22"/><rect x="384.6" y="504.0" width="3.74" height="4.18" fill="rgb(45,128,232)" fill-opacity="0.29"/><rect x="388.2" y="504.0" width="3.74" height="4.18" fill="rgb(45,128,232)" fill-opacity="0.24"/><rect x="391.9" y="504.0" width="3.74" height="4.18" fill="rgb(45,128,232)" fill-opacity="0.20"/><rect x="395.6" y="504.0" width="3.74" height="4.18" fill="rgb(45,128,232)" fill-opacity="0.24"/><rect x="399.3" y="504.0" width="3.74" height="4.18" fill="rgb(45,128,232)" fill-opacity="0.22"/><rect x="403.0" y="504.0" width="3.74" height="4.18" fill="rgb(45,128,232)" fill-opacity="0.18"/><rect x="406.7" y="504.0" width="3.74" height="4.18" fill="rgb(45,128,232)" fill-opacity="0.32"/><rect x="410.4" y="504.0" width="3.74" height="4.18" fill="rgb(45,128,232)" fill-opacity="0.29"/><rect x="414.1" y="504.0" width="3.74" height="4.18" fill="rgb(45,128,232)" fill-opacity="0.29"/><rect x="417.8" y="504.0" width="3.74" height="4.18" fill="rgb(45,128,232)" fill-opacity="0.33"/><rect x="421.4" y="504.0" width="3.74" height="4.18" fill="rgb(45,128,232)" fill-opacity="0.24"/><rect x="425.1" y="504.0" width="3.74" height="4.18" fill="rgb(45,128,232)" fill-opacity="0.23"/><rect x="428.8" y="504.0" width="3.74" height="4.18" fill="rgb(45,128,232)" fill-opacity="0.11"/><rect x="314.5" y="508.2" width="3.74" height="4.18" fill="rgb(45,128,232)" fill-opacity="0.26"/><rect x="318.2" y="508.2" width="3.74" height="4.18" fill="rgb(45,128,232)" fill-opacity="0.69"/><rect x="321.9" y="508.2" width="3.74" height="4.18" fill="rgb(45,128,232)" fill-opacity="0.38"/><rect x="325.6" y="508.2" width="3.74" height="4.18" fill="rgb(45,128,232)" fill-opacity="0.60"/><rect x="329.2" y="508.2" width="3.74" height="4.18" fill="rgb(45,128,232)" fill-opacity="0.63"/><rect x="332.9" y="508.2" width="3.74" height="4.18" fill="rgb(45,128,232)" fill-opacity="0.54"/><rect x="336.6" y="508.2" width="3.74" height="4.18" fill="rgb(45,128,232)" fill-opacity="0.39"/><rect x="340.3" y="508.2" width="3.74" height="4.18" fill="rgb(45,128,232)" fill-opacity="0.71"/><rect x="344.0" y="508.2" width="3.74" height="4.18" fill="rgb(45,128,232)" fill-opacity="0.38"/><rect x="347.7" y="508.2" width="3.74" height="4.18" fill="rgb(45,128,232)" fill-opacity="0.65"/><rect x="351.4" y="508.2" width="3.74" height="4.18" fill="rgb(45,128,232)" fill-opacity="0.45"/><rect x="355.1" y="508.2" width="3.74" height="4.18" fill="rgb(45,128,232)" fill-opacity="0.40"/><rect x="358.8" y="508.2" width="3.74" height="4.18" fill="rgb(45,128,232)" fill-opacity="0.46"/><rect x="362.4" y="508.2" width="3.74" height="4.18" fill="rgb(45,128,232)" fill-opacity="0.41"/><rect x="366.1" y="508.2" width="3.74" height="4.18" fill="rgb(45,128,232)" fill-opacity="0.45"/><rect x="369.8" y="508.2" width="3.74" height="4.18" fill="rgb(45,128,232)" fill-opacity="0.70"/><rect x="373.5" y="508.2" width="3.74" height="4.18" fill="rgb(45,128,232)" fill-opacity="0.72"/><rect x="377.2" y="508.2" width="3.74" height="4.18" fill="rgb(45,128,232)" fill-opacity="0.55"/><rect x="380.9" y="508.2" width="3.74" height="4.18" fill="rgb(45,128,232)" fill-opacity="0.69"/><rect x="384.6" y="508.2" width="3.74" height="4.18" fill="rgb(45,128,232)" fill-opacity="0.60"/><rect x="388.2" y="508.2" width="3.74" height="4.18" fill="rgb(45,128,232)" fill-opacity="0.61"/><rect x="391.9" y="508.2" width="3.74" height="4.18" fill="rgb(45,128,232)" fill-opacity="0.79"/><rect x="395.6" y="508.2" width="3.74" height="4.18" fill="rgb(45,128,232)" fill-opacity="0.53"/><rect x="399.3" y="508.2" width="3.74" height="4.18" fill="rgb(45,128,232)" fill-opacity="0.79"/><rect x="403.0" y="508.2" width="3.74" height="4.18" fill="rgb(45,128,232)" fill-opacity="0.70"/><rect x="406.7" y="508.2" width="3.74" height="4.18" fill="rgb(45,128,232)" fill-opacity="0.70"/><rect x="410.4" y="508.2" width="3.74" height="4.18" fill="rgb(45,128,232)" fill-opacity="0.38"/><rect x="414.1" y="508.2" width="3.74" height="4.18" fill="rgb(45,128,232)" fill-opacity="0.42"/><rect x="417.8" y="508.2" width="3.74" height="4.18" fill="rgb(45,128,232)" fill-opacity="0.40"/><rect x="421.4" y="508.2" width="3.74" height="4.18" fill="rgb(45,128,232)" fill-opacity="0.54"/><rect x="425.1" y="508.2" width="3.74" height="4.18" fill="rgb(45,128,232)" fill-opacity="0.82"/><rect x="428.8" y="508.2" width="3.74" height="4.18" fill="rgb(45,128,232)" fill-opacity="0.36"/><rect x="314.5" y="512.3" width="3.74" height="4.18" fill="rgb(45,128,232)" fill-opacity="0.15"/><rect x="318.2" y="512.3" width="3.74" height="4.18" fill="rgb(45,128,232)" fill-opacity="0.18"/><rect x="321.9" y="512.3" width="3.74" height="4.18" fill="rgb(45,128,232)" fill-opacity="0.30"/><rect x="325.6" y="512.3" width="3.74" height="4.18" fill="rgb(45,128,232)" fill-opacity="0.31"/><rect x="329.2" y="512.3" width="3.74" height="4.18" fill="rgb(45,128,232)" fill-opacity="0.32"/><rect x="332.9" y="512.3" width="3.74" height="4.18" fill="rgb(45,128,232)" fill-opacity="0.32"/><rect x="336.6" y="512.3" width="3.74" height="4.18" fill="rgb(45,128,232)" fill-opacity="0.19"/><rect x="340.3" y="512.3" width="3.74" height="4.18" fill="rgb(45,128,232)" fill-opacity="0.19"/><rect x="344.0" y="512.3" width="3.74" height="4.18" fill="rgb(45,128,232)" fill-opacity="0.32"/><rect x="347.7" y="512.3" width="3.74" height="4.18" fill="rgb(45,128,232)" fill-opacity="0.31"/><rect x="351.4" y="512.3" width="3.74" height="4.18" fill="rgb(45,128,232)" fill-opacity="0.34"/><rect x="355.1" y="512.3" width="3.74" height="4.18" fill="rgb(45,128,232)" fill-opacity="0.25"/><rect x="358.8" y="512.3" width="3.74" height="4.18" fill="rgb(45,128,232)" fill-opacity="0.34"/><rect x="362.4" y="512.3" width="3.74" height="4.18" fill="rgb(45,128,232)" fill-opacity="0.19"/><rect x="366.1" y="512.3" width="3.74" height="4.18" fill="rgb(45,128,232)" fill-opacity="0.35"/><rect x="369.8" y="512.3" width="3.74" height="4.18" fill="rgb(45,128,232)" fill-opacity="0.33"/><rect x="373.5" y="512.3" width="3.74" height="4.18" fill="rgb(45,128,232)" fill-opacity="0.23"/><rect x="377.2" y="512.3" width="3.74" height="4.18" fill="rgb(45,128,232)" fill-opacity="0.17"/><rect x="380.9" y="512.3" width="3.74" height="4.18" fill="rgb(45,128,232)" fill-opacity="0.27"/><rect x="384.6" y="512.3" width="3.74" height="4.18" fill="rgb(45,128,232)" fill-opacity="0.30"/><rect x="388.2" y="512.3" width="3.74" height="4.18" fill="rgb(45,128,232)" fill-opacity="0.23"/><rect x="391.9" y="512.3" width="3.74" height="4.18" fill="rgb(45,128,232)" fill-opacity="0.17"/><rect x="395.6" y="512.3" width="3.74" height="4.18" fill="rgb(45,128,232)" fill-opacity="0.21"/><rect x="399.3" y="512.3" width="3.74" height="4.18" fill="rgb(45,128,232)" fill-opacity="0.32"/><rect x="403.0" y="512.3" width="3.74" height="4.18" fill="rgb(45,128,232)" fill-opacity="0.18"/><rect x="406.7" y="512.3" width="3.74" height="4.18" fill="rgb(45,128,232)" fill-opacity="0.34"/><rect x="410.4" y="512.3" width="3.74" height="4.18" fill="rgb(45,128,232)" fill-opacity="0.21"/><rect x="414.1" y="512.3" width="3.74" height="4.18" fill="rgb(45,128,232)" fill-opacity="0.20"/><rect x="417.8" y="512.3" width="3.74" height="4.18" fill="rgb(45,128,232)" fill-opacity="0.18"/><rect x="421.4" y="512.3" width="3.74" height="4.18" fill="rgb(45,128,232)" fill-opacity="0.35"/><rect x="425.1" y="512.3" width="3.74" height="4.18" fill="rgb(45,128,232)" fill-opacity="0.34"/><rect x="428.8" y="512.3" width="3.74" height="4.18" fill="rgb(45,128,232)" fill-opacity="0.10"/><rect x="536.0" y="504.0" width="3.78" height="4.18" fill="rgb(85,85,85)" fill-opacity="0.04"/><rect x="539.7" y="504.0" width="3.78" height="4.18" fill="rgb(85,85,85)" fill-opacity="0.13"/><rect x="543.5" y="504.0" width="3.78" height="4.18" fill="rgb(85,85,85)" fill-opacity="0.08"/><rect x="547.2" y="504.0" width="3.78" height="4.18" fill="rgb(85,85,85)" fill-opacity="0.12"/><rect x="550.9" y="504.0" width="3.78" height="4.18" fill="rgb(85,85,85)" fill-opacity="0.18"/><rect x="554.7" y="504.0" width="3.78" height="4.18" fill="rgb(85,85,85)" fill-opacity="0.18"/><rect x="558.4" y="504.0" width="3.78" height="4.18" fill="rgb(85,85,85)" fill-opacity="0.15"/><rect x="562.1" y="504.0" width="3.78" height="4.18" fill="rgb(85,85,85)" fill-opacity="0.18"/><rect x="565.8" y="504.0" width="3.78" height="4.18" fill="rgb(85,85,85)" fill-opacity="0.14"/><rect x="573.3" y="504.0" width="3.78" height="4.18" fill="rgb(85,85,85)" fill-opacity="0.20"/><rect x="577.0" y="504.0" width="3.78" height="4.18" fill="rgb(85,85,85)" fill-opacity="0.16"/><rect x="580.8" y="504.0" width="3.78" height="4.18" fill="rgb(85,85,85)" fill-opacity="0.10"/><rect x="584.5" y="504.0" width="3.78" height="4.18" fill="rgb(85,85,85)" fill-opacity="0.16"/><rect x="588.2" y="504.0" width="3.78" height="4.18" fill="rgb(85,85,85)" fill-opacity="0.15"/><rect x="592.0" y="504.0" width="3.78" height="4.18" fill="rgb(85,85,85)" fill-opacity="0.15"/><rect x="595.7" y="504.0" width="3.78" height="4.18" fill="rgb(85,85,85)" fill-opacity="0.11"/><rect x="599.4" y="504.0" width="3.78" height="4.18" fill="rgb(85,85,85)" fill-opacity="0.18"/><rect x="603.2" y="504.0" width="3.78" height="4.18" fill="rgb(85,85,85)" fill-opacity="0.11"/><rect x="606.9" y="504.0" width="3.78" height="4.18" fill="rgb(85,85,85)" fill-opacity="0.12"/><rect x="610.6" y="504.0" width="3.78" height="4.18" fill="rgb(85,85,85)" fill-opacity="0.12"/><rect x="614.3" y="504.0" width="3.78" height="4.18" fill="rgb(85,85,85)" fill-opacity="0.12"/><rect x="618.1" y="504.0" width="3.78" height="4.18" fill="rgb(85,85,85)" fill-opacity="0.11"/><rect x="621.8" y="504.0" width="3.78" height="4.18" fill="rgb(85,85,85)" fill-opacity="0.18"/><rect x="625.5" y="504.0" width="3.78" height="4.18" fill="rgb(85,85,85)" fill-opacity="0.17"/><rect x="629.3" y="504.0" width="3.78" height="4.18" fill="rgb(85,85,85)" fill-opacity="0.04"/><rect x="536.0" y="508.2" width="3.78" height="4.18" fill="rgb(85,85,85)" fill-opacity="0.24"/><rect x="539.7" y="508.2" width="3.78" height="4.18" fill="rgb(85,85,85)" fill-opacity="0.31"/><rect x="543.5" y="508.2" width="3.78" height="4.18" fill="rgb(85,85,85)" fill-opacity="0.56"/><rect x="547.2" y="508.2" width="3.78" height="4.18" fill="rgb(85,85,85)" fill-opacity="0.46"/><rect x="550.9" y="508.2" width="3.78" height="4.18" fill="rgb(85,85,85)" fill-opacity="0.52"/><rect x="554.7" y="508.2" width="3.78" height="4.18" fill="rgb(85,85,85)" fill-opacity="0.62"/><rect x="558.4" y="508.2" width="3.78" height="4.18" fill="rgb(85,85,85)" fill-opacity="0.62"/><rect x="562.1" y="508.2" width="3.78" height="4.18" fill="rgb(85,85,85)" fill-opacity="0.58"/><rect x="565.8" y="508.2" width="3.78" height="4.18" fill="rgb(85,85,85)" fill-opacity="0.41"/><rect x="573.3" y="508.2" width="3.78" height="4.18" fill="rgb(85,85,85)" fill-opacity="0.32"/><rect x="577.0" y="508.2" width="3.78" height="4.18" fill="rgb(85,85,85)" fill-opacity="0.54"/><rect x="580.8" y="508.2" width="3.78" height="4.18" fill="rgb(85,85,85)" fill-opacity="0.52"/><rect x="584.5" y="508.2" width="3.78" height="4.18" fill="rgb(85,85,85)" fill-opacity="0.67"/><rect x="588.2" y="508.2" width="3.78" height="4.18" fill="rgb(85,85,85)" fill-opacity="0.67"/><rect x="592.0" y="508.2" width="3.78" height="4.18" fill="rgb(85,85,85)" fill-opacity="0.36"/><rect x="595.7" y="508.2" width="3.78" height="4.18" fill="rgb(85,85,85)" fill-opacity="0.46"/><rect x="599.4" y="508.2" width="3.78" height="4.18" fill="rgb(85,85,85)" fill-opacity="0.59"/><rect x="603.2" y="508.2" width="3.78" height="4.18" fill="rgb(85,85,85)" fill-opacity="0.46"/><rect x="606.9" y="508.2" width="3.78" height="4.18" fill="rgb(85,85,85)" fill-opacity="0.71"/><rect x="610.6" y="508.2" width="3.78" height="4.18" fill="rgb(85,85,85)" fill-opacity="0.29"/><rect x="614.3" y="508.2" width="3.78" height="4.18" fill="rgb(85,85,85)" fill-opacity="0.46"/><rect x="618.1" y="508.2" width="3.78" height="4.18" fill="rgb(85,85,85)" fill-opacity="0.65"/><rect x="621.8" y="508.2" width="3.78" height="4.18" fill="rgb(85,85,85)" fill-opacity="0.70"/><rect x="625.5" y="508.2" width="3.78" height="4.18" fill="rgb(85,85,85)" fill-opacity="0.50"/><rect x="629.3" y="508.2" width="3.78" height="4.18" fill="rgb(85,85,85)" fill-opacity="0.18"/><rect x="536.0" y="512.3" width="3.78" height="4.18" fill="rgb(85,85,85)" fill-opacity="0.08"/><rect x="539.7" y="512.3" width="3.78" height="4.18" fill="rgb(85,85,85)" fill-opacity="0.13"/><rect x="543.5" y="512.3" width="3.78" height="4.18" fill="rgb(85,85,85)" fill-opacity="0.19"/><rect x="547.2" y="512.3" width="3.78" height="4.18" fill="rgb(85,85,85)" fill-opacity="0.14"/><rect x="550.9" y="512.3" width="3.78" height="4.18" fill="rgb(85,85,85)" fill-opacity="0.12"/><rect x="554.7" y="512.3" width="3.78" height="4.18" fill="rgb(85,85,85)" fill-opacity="0.17"/><rect x="558.4" y="512.3" width="3.78" height="4.18" fill="rgb(85,85,85)" fill-opacity="0.20"/><rect x="562.1" y="512.3" width="3.78" height="4.18" fill="rgb(85,85,85)" fill-opacity="0.16"/><rect x="565.8" y="512.3" width="3.78" height="4.18" fill="rgb(85,85,85)" fill-opacity="0.17"/><rect x="573.3" y="512.3" width="3.78" height="4.18" fill="rgb(85,85,85)" fill-opacity="0.17"/><rect x="577.0" y="512.3" width="3.78" height="4.18" fill="rgb(85,85,85)" fill-opacity="0.16"/><rect x="580.8" y="512.3" width="3.78" height="4.18" fill="rgb(85,85,85)" fill-opacity="0.09"/><rect x="584.5" y="512.3" width="3.78" height="4.18" fill="rgb(85,85,85)" fill-opacity="0.14"/><rect x="588.2" y="512.3" width="3.78" height="4.18" fill="rgb(85,85,85)" fill-opacity="0.21"/><rect x="592.0" y="512.3" width="3.78" height="4.18" fill="rgb(85,85,85)" fill-opacity="0.16"/><rect x="595.7" y="512.3" width="3.78" height="4.18" fill="rgb(85,85,85)" fill-opacity="0.20"/><rect x="599.4" y="512.3" width="3.78" height="4.18" fill="rgb(85,85,85)" fill-opacity="0.22"/><rect x="603.2" y="512.3" width="3.78" height="4.18" fill="rgb(85,85,85)" fill-opacity="0.09"/><rect x="606.9" y="512.3" width="3.78" height="4.18" fill="rgb(85,85,85)" fill-opacity="0.19"/><rect x="610.6" y="512.3" width="3.78" height="4.18" fill="rgb(85,85,85)" fill-opacity="0.16"/><rect x="614.3" y="512.3" width="3.78" height="4.18" fill="rgb(85,85,85)" fill-opacity="0.09"/><rect x="618.1" y="512.3" width="3.78" height="4.18" fill="rgb(85,85,85)" fill-opacity="0.12"/><rect x="621.8" y="512.3" width="3.78" height="4.18" fill="rgb(85,85,85)" fill-opacity="0.16"/><rect x="625.5" y="512.3" width="3.78" height="4.18" fill="rgb(85,85,85)" fill-opacity="0.15"/><rect x="629.3" y="512.3" width="3.78" height="4.18" fill="rgb(85,85,85)" fill-opacity="0.10"/><rect x="314.5" y="540.8" width="3.74" height="4.18" fill="rgb(45,128,232)" fill-opacity="0.08"/><rect x="318.2" y="540.8" width="3.74" height="4.18" fill="rgb(45,128,232)" fill-opacity="0.28"/><rect x="321.9" y="540.8" width="3.74" height="4.18" fill="rgb(45,128,232)" fill-opacity="0.19"/><rect x="325.6" y="540.8" width="3.74" height="4.18" fill="rgb(45,128,232)" fill-opacity="0.30"/><rect x="329.2" y="540.8" width="3.74" height="4.18" fill="rgb(45,128,232)" fill-opacity="0.28"/><rect x="332.9" y="540.8" width="3.74" height="4.18" fill="rgb(45,128,232)" fill-opacity="0.24"/><rect x="336.6" y="540.8" width="3.74" height="4.18" fill="rgb(45,128,232)" fill-opacity="0.28"/><rect x="340.3" y="540.8" width="3.74" height="4.18" fill="rgb(45,128,232)" fill-opacity="0.27"/><rect x="344.0" y="540.8" width="3.74" height="4.18" fill="rgb(45,128,232)" fill-opacity="0.17"/><rect x="347.7" y="540.8" width="3.74" height="4.18" fill="rgb(45,128,232)" fill-opacity="0.26"/><rect x="351.4" y="540.8" width="3.74" height="4.18" fill="rgb(45,128,232)" fill-opacity="0.28"/><rect x="355.1" y="540.8" width="3.74" height="4.18" fill="rgb(45,128,232)" fill-opacity="0.26"/><rect x="358.8" y="540.8" width="3.74" height="4.18" fill="rgb(45,128,232)" fill-opacity="0.33"/><rect x="362.4" y="540.8" width="3.74" height="4.18" fill="rgb(45,128,232)" fill-opacity="0.30"/><rect x="366.1" y="540.8" width="3.74" height="4.18" fill="rgb(45,128,232)" fill-opacity="0.23"/><rect x="369.8" y="540.8" width="3.74" height="4.18" fill="rgb(45,128,232)" fill-opacity="0.20"/><rect x="373.5" y="540.8" width="3.74" height="4.18" fill="rgb(45,128,232)" fill-opacity="0.18"/><rect x="377.2" y="540.8" width="3.74" height="4.18" fill="rgb(45,128,232)" fill-opacity="0.32"/><rect x="380.9" y="540.8" width="3.74" height="4.18" fill="rgb(45,128,232)" fill-opacity="0.30"/><rect x="384.6" y="540.8" width="3.74" height="4.18" fill="rgb(45,128,232)" fill-opacity="0.28"/><rect x="388.2" y="540.8" width="3.74" height="4.18" fill="rgb(45,128,232)" fill-opacity="0.25"/><rect x="391.9" y="540.8" width="3.74" height="4.18" fill="rgb(45,128,232)" fill-opacity="0.26"/><rect x="395.6" y="540.8" width="3.74" height="4.18" fill="rgb(45,128,232)" fill-opacity="0.20"/><rect x="399.3" y="540.8" width="3.74" height="4.18" fill="rgb(45,128,232)" fill-opacity="0.26"/><rect x="403.0" y="540.8" width="3.74" height="4.18" fill="rgb(45,128,232)" fill-opacity="0.19"/><rect x="406.7" y="540.8" width="3.74" height="4.18" fill="rgb(45,128,232)" fill-opacity="0.28"/><rect x="410.4" y="540.8" width="3.74" height="4.18" fill="rgb(45,128,232)" fill-opacity="0.28"/><rect x="414.1" y="540.8" width="3.74" height="4.18" fill="rgb(45,128,232)" fill-opacity="0.29"/><rect x="417.8" y="540.8" width="3.74" height="4.18" fill="rgb(45,128,232)" fill-opacity="0.21"/><rect x="421.4" y="540.8" width="3.74" height="4.18" fill="rgb(45,128,232)" fill-opacity="0.18"/><rect x="425.1" y="540.8" width="3.74" height="4.18" fill="rgb(45,128,232)" fill-opacity="0.23"/><rect x="428.8" y="540.8" width="3.74" height="4.18" fill="rgb(45,128,232)" fill-opacity="0.13"/><rect x="314.5" y="544.9" width="3.74" height="4.18" fill="rgb(45,128,232)" fill-opacity="0.28"/><rect x="318.2" y="544.9" width="3.74" height="4.18" fill="rgb(45,128,232)" fill-opacity="0.73"/><rect x="321.9" y="544.9" width="3.74" height="4.18" fill="rgb(45,128,232)" fill-opacity="0.58"/><rect x="325.6" y="544.9" width="3.74" height="4.18" fill="rgb(45,128,232)" fill-opacity="0.57"/><rect x="329.2" y="544.9" width="3.74" height="4.18" fill="rgb(45,128,232)" fill-opacity="0.81"/><rect x="332.9" y="544.9" width="3.74" height="4.18" fill="rgb(45,128,232)" fill-opacity="0.46"/><rect x="336.6" y="544.9" width="3.74" height="4.18" fill="rgb(45,128,232)" fill-opacity="0.48"/><rect x="340.3" y="544.9" width="3.74" height="4.18" fill="rgb(45,128,232)" fill-opacity="0.66"/><rect x="344.0" y="544.9" width="3.74" height="4.18" fill="rgb(45,128,232)" fill-opacity="0.68"/><rect x="347.7" y="544.9" width="3.74" height="4.18" fill="rgb(45,128,232)" fill-opacity="0.58"/><rect x="351.4" y="544.9" width="3.74" height="4.18" fill="rgb(45,128,232)" fill-opacity="0.64"/><rect x="355.1" y="544.9" width="3.74" height="4.18" fill="rgb(45,128,232)" fill-opacity="0.59"/><rect x="358.8" y="544.9" width="3.74" height="4.18" fill="rgb(45,128,232)" fill-opacity="0.69"/><rect x="362.4" y="544.9" width="3.74" height="4.18" fill="rgb(45,128,232)" fill-opacity="0.80"/><rect x="366.1" y="544.9" width="3.74" height="4.18" fill="rgb(45,128,232)" fill-opacity="0.77"/><rect x="369.8" y="544.9" width="3.74" height="4.18" fill="rgb(45,128,232)" fill-opacity="0.68"/><rect x="373.5" y="544.9" width="3.74" height="4.18" fill="rgb(45,128,232)" fill-opacity="0.60"/><rect x="377.2" y="544.9" width="3.74" height="4.18" fill="rgb(45,128,232)" fill-opacity="0.83"/><rect x="380.9" y="544.9" width="3.74" height="4.18" fill="rgb(45,128,232)" fill-opacity="0.59"/><rect x="384.6" y="544.9" width="3.74" height="4.18" fill="rgb(45,128,232)" fill-opacity="0.67"/><rect x="388.2" y="544.9" width="3.74" height="4.18" fill="rgb(45,128,232)" fill-opacity="0.79"/><rect x="391.9" y="544.9" width="3.74" height="4.18" fill="rgb(45,128,232)" fill-opacity="0.70"/><rect x="395.6" y="544.9" width="3.74" height="4.18" fill="rgb(45,128,232)" fill-opacity="0.56"/><rect x="399.3" y="544.9" width="3.74" height="4.18" fill="rgb(45,128,232)" fill-opacity="0.73"/><rect x="403.0" y="544.9" width="3.74" height="4.18" fill="rgb(45,128,232)" fill-opacity="0.66"/><rect x="406.7" y="544.9" width="3.74" height="4.18" fill="rgb(45,128,232)" fill-opacity="0.81"/><rect x="410.4" y="544.9" width="3.74" height="4.18" fill="rgb(45,128,232)" fill-opacity="0.67"/><rect x="414.1" y="544.9" width="3.74" height="4.18" fill="rgb(45,128,232)" fill-opacity="0.63"/><rect x="417.8" y="544.9" width="3.74" height="4.18" fill="rgb(45,128,232)" fill-opacity="0.84"/><rect x="421.4" y="544.9" width="3.74" height="4.18" fill="rgb(45,128,232)" fill-opacity="0.63"/><rect x="425.1" y="544.9" width="3.74" height="4.18" fill="rgb(45,128,232)" fill-opacity="0.57"/><rect x="428.8" y="544.9" width="3.74" height="4.18" fill="rgb(45,128,232)" fill-opacity="0.37"/><rect x="314.5" y="549.0" width="3.74" height="4.18" fill="rgb(45,128,232)" fill-opacity="0.16"/><rect x="318.2" y="549.0" width="3.74" height="4.18" fill="rgb(45,128,232)" fill-opacity="0.19"/><rect x="321.9" y="549.0" width="3.74" height="4.18" fill="rgb(45,128,232)" fill-opacity="0.17"/><rect x="325.6" y="549.0" width="3.74" height="4.18" fill="rgb(45,128,232)" fill-opacity="0.33"/><rect x="329.2" y="549.0" width="3.74" height="4.18" fill="rgb(45,128,232)" fill-opacity="0.33"/><rect x="332.9" y="549.0" width="3.74" height="4.18" fill="rgb(45,128,232)" fill-opacity="0.24"/><rect x="336.6" y="549.0" width="3.74" height="4.18" fill="rgb(45,128,232)" fill-opacity="0.21"/><rect x="340.3" y="549.0" width="3.74" height="4.18" fill="rgb(45,128,232)" fill-opacity="0.29"/><rect x="344.0" y="549.0" width="3.74" height="4.18" fill="rgb(45,128,232)" fill-opacity="0.35"/><rect x="347.7" y="549.0" width="3.74" height="4.18" fill="rgb(45,128,232)" fill-opacity="0.20"/><rect x="351.4" y="549.0" width="3.74" height="4.18" fill="rgb(45,128,232)" fill-opacity="0.25"/><rect x="355.1" y="549.0" width="3.74" height="4.18" fill="rgb(45,128,232)" fill-opacity="0.29"/><rect x="358.8" y="549.0" width="3.74" height="4.18" fill="rgb(45,128,232)" fill-opacity="0.20"/><rect x="362.4" y="549.0" width="3.74" height="4.18" fill="rgb(45,128,232)" fill-opacity="0.24"/><rect x="366.1" y="549.0" width="3.74" height="4.18" fill="rgb(45,128,232)" fill-opacity="0.19"/><rect x="369.8" y="549.0" width="3.74" height="4.18" fill="rgb(45,128,232)" fill-opacity="0.25"/><rect x="373.5" y="549.0" width="3.74" height="4.18" fill="rgb(45,128,232)" fill-opacity="0.20"/><rect x="377.2" y="549.0" width="3.74" height="4.18" fill="rgb(45,128,232)" fill-opacity="0.18"/><rect x="380.9" y="549.0" width="3.74" height="4.18" fill="rgb(45,128,232)" fill-opacity="0.24"/><rect x="384.6" y="549.0" width="3.74" height="4.18" fill="rgb(45,128,232)" fill-opacity="0.19"/><rect x="388.2" y="549.0" width="3.74" height="4.18" fill="rgb(45,128,232)" fill-opacity="0.18"/><rect x="391.9" y="549.0" width="3.74" height="4.18" fill="rgb(45,128,232)" fill-opacity="0.19"/><rect x="395.6" y="549.0" width="3.74" height="4.18" fill="rgb(45,128,232)" fill-opacity="0.24"/><rect x="399.3" y="549.0" width="3.74" height="4.18" fill="rgb(45,128,232)" fill-opacity="0.22"/><rect x="403.0" y="549.0" width="3.74" height="4.18" fill="rgb(45,128,232)" fill-opacity="0.30"/><rect x="406.7" y="549.0" width="3.74" height="4.18" fill="rgb(45,128,232)" fill-opacity="0.24"/><rect x="410.4" y="549.0" width="3.74" height="4.18" fill="rgb(45,128,232)" fill-opacity="0.21"/><rect x="414.1" y="549.0" width="3.74" height="4.18" fill="rgb(45,128,232)" fill-opacity="0.20"/><rect x="417.8" y="549.0" width="3.74" height="4.18" fill="rgb(45,128,232)" fill-opacity="0.22"/><rect x="421.4" y="549.0" width="3.74" height="4.18" fill="rgb(45,128,232)" fill-opacity="0.31"/><rect x="425.1" y="549.0" width="3.74" height="4.18" fill="rgb(45,128,232)" fill-opacity="0.20"/><rect x="428.8" y="549.0" width="3.74" height="4.18" fill="rgb(45,128,232)" fill-opacity="0.11"/><rect x="536.0" y="540.8" width="3.78" height="4.18" fill="rgb(85,85,85)" fill-opacity="0.08"/><rect x="539.7" y="540.8" width="3.78" height="4.18" fill="rgb(85,85,85)" fill-opacity="0.17"/><rect x="543.5" y="540.8" width="3.78" height="4.18" fill="rgb(85,85,85)" fill-opacity="0.14"/><rect x="547.2" y="540.8" width="3.78" height="4.18" fill="rgb(85,85,85)" fill-opacity="0.11"/><rect x="550.9" y="540.8" width="3.78" height="4.18" fill="rgb(85,85,85)" fill-opacity="0.17"/><rect x="554.7" y="540.8" width="3.78" height="4.18" fill="rgb(85,85,85)" fill-opacity="0.21"/><rect x="558.4" y="540.8" width="3.78" height="4.18" fill="rgb(85,85,85)" fill-opacity="0.14"/><rect x="562.1" y="540.8" width="3.78" height="4.18" fill="rgb(85,85,85)" fill-opacity="0.20"/><rect x="565.8" y="540.8" width="3.78" height="4.18" fill="rgb(85,85,85)" fill-opacity="0.09"/><rect x="573.3" y="540.8" width="3.78" height="4.18" fill="rgb(85,85,85)" fill-opacity="0.15"/><rect x="577.0" y="540.8" width="3.78" height="4.18" fill="rgb(85,85,85)" fill-opacity="0.11"/><rect x="580.8" y="540.8" width="3.78" height="4.18" fill="rgb(85,85,85)" fill-opacity="0.15"/><rect x="584.5" y="540.8" width="3.78" height="4.18" fill="rgb(85,85,85)" fill-opacity="0.16"/><rect x="588.2" y="540.8" width="3.78" height="4.18" fill="rgb(85,85,85)" fill-opacity="0.20"/><rect x="592.0" y="540.8" width="3.78" height="4.18" fill="rgb(85,85,85)" fill-opacity="0.15"/><rect x="595.7" y="540.8" width="3.78" height="4.18" fill="rgb(85,85,85)" fill-opacity="0.20"/><rect x="599.4" y="540.8" width="3.78" height="4.18" fill="rgb(85,85,85)" fill-opacity="0.13"/><rect x="603.2" y="540.8" width="3.78" height="4.18" fill="rgb(85,85,85)" fill-opacity="0.10"/><rect x="606.9" y="540.8" width="3.78" height="4.18" fill="rgb(85,85,85)" fill-opacity="0.15"/><rect x="610.6" y="540.8" width="3.78" height="4.18" fill="rgb(85,85,85)" fill-opacity="0.18"/><rect x="614.3" y="540.8" width="3.78" height="4.18" fill="rgb(85,85,85)" fill-opacity="0.18"/><rect x="618.1" y="540.8" width="3.78" height="4.18" fill="rgb(85,85,85)" fill-opacity="0.09"/><rect x="621.8" y="540.8" width="3.78" height="4.18" fill="rgb(85,85,85)" fill-opacity="0.12"/><rect x="625.5" y="540.8" width="3.78" height="4.18" fill="rgb(85,85,85)" fill-opacity="0.12"/><rect x="629.3" y="540.8" width="3.78" height="4.18" fill="rgb(85,85,85)" fill-opacity="0.07"/><rect x="536.0" y="544.9" width="3.78" height="4.18" fill="rgb(85,85,85)" fill-opacity="0.30"/><rect x="539.7" y="544.9" width="3.78" height="4.18" fill="rgb(85,85,85)" fill-opacity="0.40"/><rect x="543.5" y="544.9" width="3.78" height="4.18" fill="rgb(85,85,85)" fill-opacity="0.30"/><rect x="547.2" y="544.9" width="3.78" height="4.18" fill="rgb(85,85,85)" fill-opacity="0.68"/><rect x="550.9" y="544.9" width="3.78" height="4.18" fill="rgb(85,85,85)" fill-opacity="0.66"/><rect x="554.7" y="544.9" width="3.78" height="4.18" fill="rgb(85,85,85)" fill-opacity="0.62"/><rect x="558.4" y="544.9" width="3.78" height="4.18" fill="rgb(85,85,85)" fill-opacity="0.30"/><rect x="562.1" y="544.9" width="3.78" height="4.18" fill="rgb(85,85,85)" fill-opacity="0.39"/><rect x="565.8" y="544.9" width="3.78" height="4.18" fill="rgb(85,85,85)" fill-opacity="0.36"/><rect x="573.3" y="544.9" width="3.78" height="4.18" fill="rgb(85,85,85)" fill-opacity="0.68"/><rect x="577.0" y="544.9" width="3.78" height="4.18" fill="rgb(85,85,85)" fill-opacity="0.33"/><rect x="580.8" y="544.9" width="3.78" height="4.18" fill="rgb(85,85,85)" fill-opacity="0.34"/><rect x="584.5" y="544.9" width="3.78" height="4.18" fill="rgb(85,85,85)" fill-opacity="0.38"/><rect x="588.2" y="544.9" width="3.78" height="4.18" fill="rgb(85,85,85)" fill-opacity="0.63"/><rect x="592.0" y="544.9" width="3.78" height="4.18" fill="rgb(85,85,85)" fill-opacity="0.37"/><rect x="595.7" y="544.9" width="3.78" height="4.18" fill="rgb(85,85,85)" fill-opacity="0.71"/><rect x="599.4" y="544.9" width="3.78" height="4.18" fill="rgb(85,85,85)" fill-opacity="0.42"/><rect x="603.2" y="544.9" width="3.78" height="4.18" fill="rgb(85,85,85)" fill-opacity="0.57"/><rect x="606.9" y="544.9" width="3.78" height="4.18" fill="rgb(85,85,85)" fill-opacity="0.36"/><rect x="610.6" y="544.9" width="3.78" height="4.18" fill="rgb(85,85,85)" fill-opacity="0.41"/><rect x="614.3" y="544.9" width="3.78" height="4.18" fill="rgb(85,85,85)" fill-opacity="0.66"/><rect x="618.1" y="544.9" width="3.78" height="4.18" fill="rgb(85,85,85)" fill-opacity="0.72"/><rect x="621.8" y="544.9" width="3.78" height="4.18" fill="rgb(85,85,85)" fill-opacity="0.39"/><rect x="625.5" y="544.9" width="3.78" height="4.18" fill="rgb(85,85,85)" fill-opacity="0.43"/><rect x="629.3" y="544.9" width="3.78" height="4.18" fill="rgb(85,85,85)" fill-opacity="0.14"/><rect x="536.0" y="549.0" width="3.78" height="4.18" fill="rgb(85,85,85)" fill-opacity="0.05"/><rect x="539.7" y="549.0" width="3.78" height="4.18" fill="rgb(85,85,85)" fill-opacity="0.14"/><rect x="543.5" y="549.0" width="3.78" height="4.18" fill="rgb(85,85,85)" fill-opacity="0.16"/><rect x="547.2" y="549.0" width="3.78" height="4.18" fill="rgb(85,85,85)" fill-opacity="0.17"/><rect x="550.9" y="549.0" width="3.78" height="4.18" fill="rgb(85,85,85)" fill-opacity="0.14"/><rect x="554.7" y="549.0" width="3.78" height="4.18" fill="rgb(85,85,85)" fill-opacity="0.11"/><rect x="558.4" y="549.0" width="3.78" height="4.18" fill="rgb(85,85,85)" fill-opacity="0.17"/><rect x="562.1" y="549.0" width="3.78" height="4.18" fill="rgb(85,85,85)" fill-opacity="0.14"/><rect x="565.8" y="549.0" width="3.78" height="4.18" fill="rgb(85,85,85)" fill-opacity="0.14"/><rect x="573.3" y="549.0" width="3.78" height="4.18" fill="rgb(85,85,85)" fill-opacity="0.23"/><rect x="577.0" y="549.0" width="3.78" height="4.18" fill="rgb(85,85,85)" fill-opacity="0.17"/><rect x="580.8" y="549.0" width="3.78" height="4.18" fill="rgb(85,85,85)" fill-opacity="0.09"/><rect x="584.5" y="549.0" width="3.78" height="4.18" fill="rgb(85,85,85)" fill-opacity="0.22"/><rect x="588.2" y="549.0" width="3.78" height="4.18" fill="rgb(85,85,85)" fill-opacity="0.23"/><rect x="592.0" y="549.0" width="3.78" height="4.18" fill="rgb(85,85,85)" fill-opacity="0.14"/><rect x="595.7" y="549.0" width="3.78" height="4.18" fill="rgb(85,85,85)" fill-opacity="0.23"/><rect x="599.4" y="549.0" width="3.78" height="4.18" fill="rgb(85,85,85)" fill-opacity="0.10"/><rect x="603.2" y="549.0" width="3.78" height="4.18" fill="rgb(85,85,85)" fill-opacity="0.22"/><rect x="606.9" y="549.0" width="3.78" height="4.18" fill="rgb(85,85,85)" fill-opacity="0.11"/><rect x="610.6" y="549.0" width="3.78" height="4.18" fill="rgb(85,85,85)" fill-opacity="0.21"/><rect x="614.3" y="549.0" width="3.78" height="4.18" fill="rgb(85,85,85)" fill-opacity="0.18"/><rect x="618.1" y="549.0" width="3.78" height="4.18" fill="rgb(85,85,85)" fill-opacity="0.22"/><rect x="621.8" y="549.0" width="3.78" height="4.18" fill="rgb(85,85,85)" fill-opacity="0.13"/><rect x="625.5" y="549.0" width="3.78" height="4.18" fill="rgb(85,85,85)" fill-opacity="0.18"/><rect x="629.3" y="549.0" width="3.78" height="4.18" fill="rgb(85,85,85)" fill-opacity="0.10"/><rect x="314.5" y="577.5" width="3.74" height="4.18" fill="rgb(45,128,232)" fill-opacity="0.16"/><rect x="318.2" y="577.5" width="3.74" height="4.18" fill="rgb(45,128,232)" fill-opacity="0.25"/><rect x="321.9" y="577.5" width="3.74" height="4.18" fill="rgb(45,128,232)" fill-opacity="0.30"/><rect x="325.6" y="577.5" width="3.74" height="4.18" fill="rgb(45,128,232)" fill-opacity="0.30"/><rect x="329.2" y="577.5" width="3.74" height="4.18" fill="rgb(45,128,232)" fill-opacity="0.20"/><rect x="332.9" y="577.5" width="3.74" height="4.18" fill="rgb(45,128,232)" fill-opacity="0.18"/><rect x="336.6" y="577.5" width="3.74" height="4.18" fill="rgb(45,128,232)" fill-opacity="0.28"/><rect x="340.3" y="577.5" width="3.74" height="4.18" fill="rgb(45,128,232)" fill-opacity="0.18"/><rect x="344.0" y="577.5" width="3.74" height="4.18" fill="rgb(45,128,232)" fill-opacity="0.24"/><rect x="347.7" y="577.5" width="3.74" height="4.18" fill="rgb(45,128,232)" fill-opacity="0.34"/><rect x="351.4" y="577.5" width="3.74" height="4.18" fill="rgb(45,128,232)" fill-opacity="0.33"/><rect x="355.1" y="577.5" width="3.74" height="4.18" fill="rgb(45,128,232)" fill-opacity="0.18"/><rect x="358.8" y="577.5" width="3.74" height="4.18" fill="rgb(45,128,232)" fill-opacity="0.18"/><rect x="362.4" y="577.5" width="3.74" height="4.18" fill="rgb(45,128,232)" fill-opacity="0.20"/><rect x="366.1" y="577.5" width="3.74" height="4.18" fill="rgb(45,128,232)" fill-opacity="0.32"/><rect x="369.8" y="577.5" width="3.74" height="4.18" fill="rgb(45,128,232)" fill-opacity="0.16"/><rect x="373.5" y="577.5" width="3.74" height="4.18" fill="rgb(45,128,232)" fill-opacity="0.20"/><rect x="377.2" y="577.5" width="3.74" height="4.18" fill="rgb(45,128,232)" fill-opacity="0.18"/><rect x="380.9" y="577.5" width="3.74" height="4.18" fill="rgb(45,128,232)" fill-opacity="0.18"/><rect x="384.6" y="577.5" width="3.74" height="4.18" fill="rgb(45,128,232)" fill-opacity="0.26"/><rect x="388.2" y="577.5" width="3.74" height="4.18" fill="rgb(45,128,232)" fill-opacity="0.20"/><rect x="391.9" y="577.5" width="3.74" height="4.18" fill="rgb(45,128,232)" fill-opacity="0.24"/><rect x="395.6" y="577.5" width="3.74" height="4.18" fill="rgb(45,128,232)" fill-opacity="0.30"/><rect x="399.3" y="577.5" width="3.74" height="4.18" fill="rgb(45,128,232)" fill-opacity="0.30"/><rect x="403.0" y="577.5" width="3.74" height="4.18" fill="rgb(45,128,232)" fill-opacity="0.24"/><rect x="406.7" y="577.5" width="3.74" height="4.18" fill="rgb(45,128,232)" fill-opacity="0.31"/><rect x="410.4" y="577.5" width="3.74" height="4.18" fill="rgb(45,128,232)" fill-opacity="0.27"/><rect x="414.1" y="577.5" width="3.74" height="4.18" fill="rgb(45,128,232)" fill-opacity="0.32"/><rect x="417.8" y="577.5" width="3.74" height="4.18" fill="rgb(45,128,232)" fill-opacity="0.21"/><rect x="421.4" y="577.5" width="3.74" height="4.18" fill="rgb(45,128,232)" fill-opacity="0.23"/><rect x="425.1" y="577.5" width="3.74" height="4.18" fill="rgb(45,128,232)" fill-opacity="0.27"/><rect x="428.8" y="577.5" width="3.74" height="4.18" fill="rgb(45,128,232)" fill-opacity="0.16"/><rect x="314.5" y="581.7" width="3.74" height="4.18" fill="rgb(45,128,232)" fill-opacity="0.30"/><rect x="318.2" y="581.7" width="3.74" height="4.18" fill="rgb(45,128,232)" fill-opacity="0.60"/><rect x="321.9" y="581.7" width="3.74" height="4.18" fill="rgb(45,128,232)" fill-opacity="0.50"/><rect x="325.6" y="581.7" width="3.74" height="4.18" fill="rgb(45,128,232)" fill-opacity="0.51"/><rect x="329.2" y="581.7" width="3.74" height="4.18" fill="rgb(45,128,232)" fill-opacity="0.48"/><rect x="332.9" y="581.7" width="3.74" height="4.18" fill="rgb(45,128,232)" fill-opacity="0.84"/><rect x="336.6" y="581.7" width="3.74" height="4.18" fill="rgb(45,128,232)" fill-opacity="0.80"/><rect x="340.3" y="581.7" width="3.74" height="4.18" fill="rgb(45,128,232)" fill-opacity="0.80"/><rect x="344.0" y="581.7" width="3.74" height="4.18" fill="rgb(45,128,232)" fill-opacity="0.63"/><rect x="347.7" y="581.7" width="3.74" height="4.18" fill="rgb(45,128,232)" fill-opacity="0.71"/><rect x="351.4" y="581.7" width="3.74" height="4.18" fill="rgb(45,128,232)" fill-opacity="0.52"/><rect x="355.1" y="581.7" width="3.74" height="4.18" fill="rgb(45,128,232)" fill-opacity="0.61"/><rect x="358.8" y="581.7" width="3.74" height="4.18" fill="rgb(45,128,232)" fill-opacity="0.45"/><rect x="362.4" y="581.7" width="3.74" height="4.18" fill="rgb(45,128,232)" fill-opacity="0.58"/><rect x="366.1" y="581.7" width="3.74" height="4.18" fill="rgb(45,128,232)" fill-opacity="0.50"/><rect x="369.8" y="581.7" width="3.74" height="4.18" fill="rgb(45,128,232)" fill-opacity="0.43"/><rect x="373.5" y="581.7" width="3.74" height="4.18" fill="rgb(45,128,232)" fill-opacity="0.81"/><rect x="377.2" y="581.7" width="3.74" height="4.18" fill="rgb(45,128,232)" fill-opacity="0.43"/><rect x="380.9" y="581.7" width="3.74" height="4.18" fill="rgb(45,128,232)" fill-opacity="0.76"/><rect x="384.6" y="581.7" width="3.74" height="4.18" fill="rgb(45,128,232)" fill-opacity="0.71"/><rect x="388.2" y="581.7" width="3.74" height="4.18" fill="rgb(45,128,232)" fill-opacity="0.42"/><rect x="391.9" y="581.7" width="3.74" height="4.18" fill="rgb(45,128,232)" fill-opacity="0.61"/><rect x="395.6" y="581.7" width="3.74" height="4.18" fill="rgb(45,128,232)" fill-opacity="0.85"/><rect x="399.3" y="581.7" width="3.74" height="4.18" fill="rgb(45,128,232)" fill-opacity="0.84"/><rect x="403.0" y="581.7" width="3.74" height="4.18" fill="rgb(45,128,232)" fill-opacity="0.64"/><rect x="406.7" y="581.7" width="3.74" height="4.18" fill="rgb(45,128,232)" fill-opacity="0.74"/><rect x="410.4" y="581.7" width="3.74" height="4.18" fill="rgb(45,128,232)" fill-opacity="0.71"/><rect x="414.1" y="581.7" width="3.74" height="4.18" fill="rgb(45,128,232)" fill-opacity="0.52"/><rect x="417.8" y="581.7" width="3.74" height="4.18" fill="rgb(45,128,232)" fill-opacity="0.64"/><rect x="421.4" y="581.7" width="3.74" height="4.18" fill="rgb(45,128,232)" fill-opacity="0.66"/><rect x="425.1" y="581.7" width="3.74" height="4.18" fill="rgb(45,128,232)" fill-opacity="0.57"/><rect x="428.8" y="581.7" width="3.74" height="4.18" fill="rgb(45,128,232)" fill-opacity="0.34"/><rect x="314.5" y="585.8" width="3.74" height="4.18" fill="rgb(45,128,232)" fill-opacity="0.11"/><rect x="318.2" y="585.8" width="3.74" height="4.18" fill="rgb(45,128,232)" fill-opacity="0.31"/><rect x="321.9" y="585.8" width="3.74" height="4.18" fill="rgb(45,128,232)" fill-opacity="0.17"/><rect x="325.6" y="585.8" width="3.74" height="4.18" fill="rgb(45,128,232)" fill-opacity="0.25"/><rect x="329.2" y="585.8" width="3.74" height="4.18" fill="rgb(45,128,232)" fill-opacity="0.17"/><rect x="332.9" y="585.8" width="3.74" height="4.18" fill="rgb(45,128,232)" fill-opacity="0.29"/><rect x="336.6" y="585.8" width="3.74" height="4.18" fill="rgb(45,128,232)" fill-opacity="0.33"/><rect x="340.3" y="585.8" width="3.74" height="4.18" fill="rgb(45,128,232)" fill-opacity="0.27"/><rect x="344.0" y="585.8" width="3.74" height="4.18" fill="rgb(45,128,232)" fill-opacity="0.27"/><rect x="347.7" y="585.8" width="3.74" height="4.18" fill="rgb(45,128,232)" fill-opacity="0.28"/><rect x="351.4" y="585.8" width="3.74" height="4.18" fill="rgb(45,128,232)" fill-opacity="0.20"/><rect x="355.1" y="585.8" width="3.74" height="4.18" fill="rgb(45,128,232)" fill-opacity="0.24"/><rect x="358.8" y="585.8" width="3.74" height="4.18" fill="rgb(45,128,232)" fill-opacity="0.27"/><rect x="362.4" y="585.8" width="3.74" height="4.18" fill="rgb(45,128,232)" fill-opacity="0.29"/><rect x="366.1" y="585.8" width="3.74" height="4.18" fill="rgb(45,128,232)" fill-opacity="0.23"/><rect x="369.8" y="585.8" width="3.74" height="4.18" fill="rgb(45,128,232)" fill-opacity="0.25"/><rect x="373.5" y="585.8" width="3.74" height="4.18" fill="rgb(45,128,232)" fill-opacity="0.22"/><rect x="377.2" y="585.8" width="3.74" height="4.18" fill="rgb(45,128,232)" fill-opacity="0.27"/><rect x="380.9" y="585.8" width="3.74" height="4.18" fill="rgb(45,128,232)" fill-opacity="0.29"/><rect x="384.6" y="585.8" width="3.74" height="4.18" fill="rgb(45,128,232)" fill-opacity="0.22"/><rect x="388.2" y="585.8" width="3.74" height="4.18" fill="rgb(45,128,232)" fill-opacity="0.29"/><rect x="391.9" y="585.8" width="3.74" height="4.18" fill="rgb(45,128,232)" fill-opacity="0.33"/><rect x="395.6" y="585.8" width="3.74" height="4.18" fill="rgb(45,128,232)" fill-opacity="0.27"/><rect x="399.3" y="585.8" width="3.74" height="4.18" fill="rgb(45,128,232)" fill-opacity="0.35"/><rect x="403.0" y="585.8" width="3.74" height="4.18" fill="rgb(45,128,232)" fill-opacity="0.22"/><rect x="406.7" y="585.8" width="3.74" height="4.18" fill="rgb(45,128,232)" fill-opacity="0.34"/><rect x="410.4" y="585.8" width="3.74" height="4.18" fill="rgb(45,128,232)" fill-opacity="0.20"/><rect x="414.1" y="585.8" width="3.74" height="4.18" fill="rgb(45,128,232)" fill-opacity="0.23"/><rect x="417.8" y="585.8" width="3.74" height="4.18" fill="rgb(45,128,232)" fill-opacity="0.32"/><rect x="421.4" y="585.8" width="3.74" height="4.18" fill="rgb(45,128,232)" fill-opacity="0.17"/><rect x="425.1" y="585.8" width="3.74" height="4.18" fill="rgb(45,128,232)" fill-opacity="0.28"/><rect x="428.8" y="585.8" width="3.74" height="4.18" fill="rgb(45,128,232)" fill-opacity="0.15"/><rect x="536.0" y="577.5" width="3.78" height="4.18" fill="rgb(85,85,85)" fill-opacity="0.04"/><rect x="539.7" y="577.5" width="3.78" height="4.18" fill="rgb(85,85,85)" fill-opacity="0.20"/><rect x="543.5" y="577.5" width="3.78" height="4.18" fill="rgb(85,85,85)" fill-opacity="0.16"/><rect x="547.2" y="577.5" width="3.78" height="4.18" fill="rgb(85,85,85)" fill-opacity="0.11"/><rect x="550.9" y="577.5" width="3.78" height="4.18" fill="rgb(85,85,85)" fill-opacity="0.19"/><rect x="554.7" y="577.5" width="3.78" height="4.18" fill="rgb(85,85,85)" fill-opacity="0.16"/><rect x="558.4" y="577.5" width="3.78" height="4.18" fill="rgb(85,85,85)" fill-opacity="0.19"/><rect x="562.1" y="577.5" width="3.78" height="4.18" fill="rgb(85,85,85)" fill-opacity="0.16"/><rect x="565.8" y="577.5" width="3.78" height="4.18" fill="rgb(85,85,85)" fill-opacity="0.18"/><rect x="573.3" y="577.5" width="3.78" height="4.18" fill="rgb(85,85,85)" fill-opacity="0.19"/><rect x="577.0" y="577.5" width="3.78" height="4.18" fill="rgb(85,85,85)" fill-opacity="0.13"/><rect x="580.8" y="577.5" width="3.78" height="4.18" fill="rgb(85,85,85)" fill-opacity="0.10"/><rect x="584.5" y="577.5" width="3.78" height="4.18" fill="rgb(85,85,85)" fill-opacity="0.20"/><rect x="588.2" y="577.5" width="3.78" height="4.18" fill="rgb(85,85,85)" fill-opacity="0.10"/><rect x="592.0" y="577.5" width="3.78" height="4.18" fill="rgb(85,85,85)" fill-opacity="0.16"/><rect x="595.7" y="577.5" width="3.78" height="4.18" fill="rgb(85,85,85)" fill-opacity="0.21"/><rect x="599.4" y="577.5" width="3.78" height="4.18" fill="rgb(85,85,85)" fill-opacity="0.13"/><rect x="603.2" y="577.5" width="3.78" height="4.18" fill="rgb(85,85,85)" fill-opacity="0.12"/><rect x="606.9" y="577.5" width="3.78" height="4.18" fill="rgb(85,85,85)" fill-opacity="0.13"/><rect x="610.6" y="577.5" width="3.78" height="4.18" fill="rgb(85,85,85)" fill-opacity="0.11"/><rect x="614.3" y="577.5" width="3.78" height="4.18" fill="rgb(85,85,85)" fill-opacity="0.18"/><rect x="618.1" y="577.5" width="3.78" height="4.18" fill="rgb(85,85,85)" fill-opacity="0.12"/><rect x="621.8" y="577.5" width="3.78" height="4.18" fill="rgb(85,85,85)" fill-opacity="0.09"/><rect x="625.5" y="577.5" width="3.78" height="4.18" fill="rgb(85,85,85)" fill-opacity="0.16"/><rect x="629.3" y="577.5" width="3.78" height="4.18" fill="rgb(85,85,85)" fill-opacity="0.05"/><rect x="536.0" y="581.7" width="3.78" height="4.18" fill="rgb(85,85,85)" fill-opacity="0.16"/><rect x="539.7" y="581.7" width="3.78" height="4.18" fill="rgb(85,85,85)" fill-opacity="0.29"/><rect x="543.5" y="581.7" width="3.78" height="4.18" fill="rgb(85,85,85)" fill-opacity="0.65"/><rect x="547.2" y="581.7" width="3.78" height="4.18" fill="rgb(85,85,85)" fill-opacity="0.45"/><rect x="550.9" y="581.7" width="3.78" height="4.18" fill="rgb(85,85,85)" fill-opacity="0.54"/><rect x="554.7" y="581.7" width="3.78" height="4.18" fill="rgb(85,85,85)" fill-opacity="0.49"/><rect x="558.4" y="581.7" width="3.78" height="4.18" fill="rgb(85,85,85)" fill-opacity="0.66"/><rect x="562.1" y="581.7" width="3.78" height="4.18" fill="rgb(85,85,85)" fill-opacity="0.31"/><rect x="565.8" y="581.7" width="3.78" height="4.18" fill="rgb(85,85,85)" fill-opacity="0.56"/><rect x="573.3" y="581.7" width="3.78" height="4.18" fill="rgb(85,85,85)" fill-opacity="0.65"/><rect x="577.0" y="581.7" width="3.78" height="4.18" fill="rgb(85,85,85)" fill-opacity="0.40"/><rect x="580.8" y="581.7" width="3.78" height="4.18" fill="rgb(85,85,85)" fill-opacity="0.47"/><rect x="584.5" y="581.7" width="3.78" height="4.18" fill="rgb(85,85,85)" fill-opacity="0.43"/><rect x="588.2" y="581.7" width="3.78" height="4.18" fill="rgb(85,85,85)" fill-opacity="0.42"/><rect x="592.0" y="581.7" width="3.78" height="4.18" fill="rgb(85,85,85)" fill-opacity="0.70"/><rect x="595.7" y="581.7" width="3.78" height="4.18" fill="rgb(85,85,85)" fill-opacity="0.38"/><rect x="599.4" y="581.7" width="3.78" height="4.18" fill="rgb(85,85,85)" fill-opacity="0.60"/><rect x="603.2" y="581.7" width="3.78" height="4.18" fill="rgb(85,85,85)" fill-opacity="0.30"/><rect x="606.9" y="581.7" width="3.78" height="4.18" fill="rgb(85,85,85)" fill-opacity="0.62"/><rect x="610.6" y="581.7" width="3.78" height="4.18" fill="rgb(85,85,85)" fill-opacity="0.32"/><rect x="614.3" y="581.7" width="3.78" height="4.18" fill="rgb(85,85,85)" fill-opacity="0.63"/><rect x="618.1" y="581.7" width="3.78" height="4.18" fill="rgb(85,85,85)" fill-opacity="0.31"/><rect x="621.8" y="581.7" width="3.78" height="4.18" fill="rgb(85,85,85)" fill-opacity="0.37"/><rect x="625.5" y="581.7" width="3.78" height="4.18" fill="rgb(85,85,85)" fill-opacity="0.40"/><rect x="629.3" y="581.7" width="3.78" height="4.18" fill="rgb(85,85,85)" fill-opacity="0.18"/><rect x="536.0" y="585.8" width="3.78" height="4.18" fill="rgb(85,85,85)" fill-opacity="0.09"/><rect x="539.7" y="585.8" width="3.78" height="4.18" fill="rgb(85,85,85)" fill-opacity="0.16"/><rect x="543.5" y="585.8" width="3.78" height="4.18" fill="rgb(85,85,85)" fill-opacity="0.10"/><rect x="547.2" y="585.8" width="3.78" height="4.18" fill="rgb(85,85,85)" fill-opacity="0.12"/><rect x="550.9" y="585.8" width="3.78" height="4.18" fill="rgb(85,85,85)" fill-opacity="0.15"/><rect x="554.7" y="585.8" width="3.78" height="4.18" fill="rgb(85,85,85)" fill-opacity="0.19"/><rect x="558.4" y="585.8" width="3.78" height="4.18" fill="rgb(85,85,85)" fill-opacity="0.18"/><rect x="562.1" y="585.8" width="3.78" height="4.18" fill="rgb(85,85,85)" fill-opacity="0.16"/><rect x="565.8" y="585.8" width="3.78" height="4.18" fill="rgb(85,85,85)" fill-opacity="0.20"/><rect x="573.3" y="585.8" width="3.78" height="4.18" fill="rgb(85,85,85)" fill-opacity="0.22"/><rect x="577.0" y="585.8" width="3.78" height="4.18" fill="rgb(85,85,85)" fill-opacity="0.22"/><rect x="580.8" y="585.8" width="3.78" height="4.18" fill="rgb(85,85,85)" fill-opacity="0.23"/><rect x="584.5" y="585.8" width="3.78" height="4.18" fill="rgb(85,85,85)" fill-opacity="0.22"/><rect x="588.2" y="585.8" width="3.78" height="4.18" fill="rgb(85,85,85)" fill-opacity="0.23"/><rect x="592.0" y="585.8" width="3.78" height="4.18" fill="rgb(85,85,85)" fill-opacity="0.19"/><rect x="595.7" y="585.8" width="3.78" height="4.18" fill="rgb(85,85,85)" fill-opacity="0.19"/><rect x="599.4" y="585.8" width="3.78" height="4.18" fill="rgb(85,85,85)" fill-opacity="0.17"/><rect x="603.2" y="585.8" width="3.78" height="4.18" fill="rgb(85,85,85)" fill-opacity="0.14"/><rect x="606.9" y="585.8" width="3.78" height="4.18" fill="rgb(85,85,85)" fill-opacity="0.21"/><rect x="610.6" y="585.8" width="3.78" height="4.18" fill="rgb(85,85,85)" fill-opacity="0.14"/><rect x="614.3" y="585.8" width="3.78" height="4.18" fill="rgb(85,85,85)" fill-opacity="0.22"/><rect x="618.1" y="585.8" width="3.78" height="4.18" fill="rgb(85,85,85)" fill-opacity="0.15"/><rect x="621.8" y="585.8" width="3.78" height="4.18" fill="rgb(85,85,85)" fill-opacity="0.09"/><rect x="625.5" y="585.8" width="3.78" height="4.18" fill="rgb(85,85,85)" fill-opacity="0.21"/><rect x="629.3" y="585.8" width="3.78" height="4.18" fill="rgb(85,85,85)" fill-opacity="0.07"/><rect x="314.5" y="614.3" width="3.74" height="4.18" fill="rgb(45,128,232)" fill-opacity="0.16"/><rect x="318.2" y="614.3" width="3.74" height="4.18" fill="rgb(45,128,232)" fill-opacity="0.33"/><rect x="321.9" y="614.3" width="3.74" height="4.18" fill="rgb(45,128,232)" fill-opacity="0.30"/><rect x="325.6" y="614.3" width="3.74" height="4.18" fill="rgb(45,128,232)" fill-opacity="0.20"/><rect x="329.2" y="614.3" width="3.74" height="4.18" fill="rgb(45,128,232)" fill-opacity="0.22"/><rect x="332.9" y="614.3" width="3.74" height="4.18" fill="rgb(45,128,232)" fill-opacity="0.30"/><rect x="336.6" y="614.3" width="3.74" height="4.18" fill="rgb(45,128,232)" fill-opacity="0.32"/><rect x="340.3" y="614.3" width="3.74" height="4.18" fill="rgb(45,128,232)" fill-opacity="0.16"/><rect x="344.0" y="614.3" width="3.74" height="4.18" fill="rgb(45,128,232)" fill-opacity="0.19"/><rect x="347.7" y="614.3" width="3.74" height="4.18" fill="rgb(45,128,232)" fill-opacity="0.34"/><rect x="351.4" y="614.3" width="3.74" height="4.18" fill="rgb(45,128,232)" fill-opacity="0.18"/><rect x="355.1" y="614.3" width="3.74" height="4.18" fill="rgb(45,128,232)" fill-opacity="0.29"/><rect x="358.8" y="614.3" width="3.74" height="4.18" fill="rgb(45,128,232)" fill-opacity="0.22"/><rect x="362.4" y="614.3" width="3.74" height="4.18" fill="rgb(45,128,232)" fill-opacity="0.29"/><rect x="366.1" y="614.3" width="3.74" height="4.18" fill="rgb(45,128,232)" fill-opacity="0.33"/><rect x="369.8" y="614.3" width="3.74" height="4.18" fill="rgb(45,128,232)" fill-opacity="0.27"/><rect x="373.5" y="614.3" width="3.74" height="4.18" fill="rgb(45,128,232)" fill-opacity="0.24"/><rect x="377.2" y="614.3" width="3.74" height="4.18" fill="rgb(45,128,232)" fill-opacity="0.22"/><rect x="380.9" y="614.3" width="3.74" height="4.18" fill="rgb(45,128,232)" fill-opacity="0.28"/><rect x="384.6" y="614.3" width="3.74" height="4.18" fill="rgb(45,128,232)" fill-opacity="0.28"/><rect x="388.2" y="614.3" width="3.74" height="4.18" fill="rgb(45,128,232)" fill-opacity="0.24"/><rect x="391.9" y="614.3" width="3.74" height="4.18" fill="rgb(45,128,232)" fill-opacity="0.25"/><rect x="395.6" y="614.3" width="3.74" height="4.18" fill="rgb(45,128,232)" fill-opacity="0.27"/><rect x="399.3" y="614.3" width="3.74" height="4.18" fill="rgb(45,128,232)" fill-opacity="0.21"/><rect x="403.0" y="614.3" width="3.74" height="4.18" fill="rgb(45,128,232)" fill-opacity="0.20"/><rect x="406.7" y="614.3" width="3.74" height="4.18" fill="rgb(45,128,232)" fill-opacity="0.27"/><rect x="410.4" y="614.3" width="3.74" height="4.18" fill="rgb(45,128,232)" fill-opacity="0.18"/><rect x="414.1" y="614.3" width="3.74" height="4.18" fill="rgb(45,128,232)" fill-opacity="0.28"/><rect x="417.8" y="614.3" width="3.74" height="4.18" fill="rgb(45,128,232)" fill-opacity="0.32"/><rect x="421.4" y="614.3" width="3.74" height="4.18" fill="rgb(45,128,232)" fill-opacity="0.32"/><rect x="425.1" y="614.3" width="3.74" height="4.18" fill="rgb(45,128,232)" fill-opacity="0.21"/><rect x="428.8" y="614.3" width="3.74" height="4.18" fill="rgb(45,128,232)" fill-opacity="0.11"/><rect x="314.5" y="618.4" width="3.74" height="4.18" fill="rgb(45,128,232)" fill-opacity="0.37"/><rect x="318.2" y="618.4" width="3.74" height="4.18" fill="rgb(45,128,232)" fill-opacity="0.54"/><rect x="321.9" y="618.4" width="3.74" height="4.18" fill="rgb(45,128,232)" fill-opacity="0.85"/><rect x="325.6" y="618.4" width="3.74" height="4.18" fill="rgb(45,128,232)" fill-opacity="0.47"/><rect x="329.2" y="618.4" width="3.74" height="4.18" fill="rgb(45,128,232)" fill-opacity="0.78"/><rect x="332.9" y="618.4" width="3.74" height="4.18" fill="rgb(45,128,232)" fill-opacity="0.40"/><rect x="336.6" y="618.4" width="3.74" height="4.18" fill="rgb(45,128,232)" fill-opacity="0.69"/><rect x="340.3" y="618.4" width="3.74" height="4.18" fill="rgb(45,128,232)" fill-opacity="0.76"/><rect x="344.0" y="618.4" width="3.74" height="4.18" fill="rgb(45,128,232)" fill-opacity="0.64"/><rect x="347.7" y="618.4" width="3.74" height="4.18" fill="rgb(45,128,232)" fill-opacity="0.68"/><rect x="351.4" y="618.4" width="3.74" height="4.18" fill="rgb(45,128,232)" fill-opacity="0.81"/><rect x="355.1" y="618.4" width="3.74" height="4.18" fill="rgb(45,128,232)" fill-opacity="0.85"/><rect x="358.8" y="618.4" width="3.74" height="4.18" fill="rgb(45,128,232)" fill-opacity="0.46"/><rect x="362.4" y="618.4" width="3.74" height="4.18" fill="rgb(45,128,232)" fill-opacity="0.63"/><rect x="366.1" y="618.4" width="3.74" height="4.18" fill="rgb(45,128,232)" fill-opacity="0.40"/><rect x="369.8" y="618.4" width="3.74" height="4.18" fill="rgb(45,128,232)" fill-opacity="0.56"/><rect x="373.5" y="618.4" width="3.74" height="4.18" fill="rgb(45,128,232)" fill-opacity="0.45"/><rect x="377.2" y="618.4" width="3.74" height="4.18" fill="rgb(45,128,232)" fill-opacity="0.46"/><rect x="380.9" y="618.4" width="3.74" height="4.18" fill="rgb(45,128,232)" fill-opacity="0.67"/><rect x="384.6" y="618.4" width="3.74" height="4.18" fill="rgb(45,128,232)" fill-opacity="0.42"/><rect x="388.2" y="618.4" width="3.74" height="4.18" fill="rgb(45,128,232)" fill-opacity="0.45"/><rect x="391.9" y="618.4" width="3.74" height="4.18" fill="rgb(45,128,232)" fill-opacity="0.38"/><rect x="395.6" y="618.4" width="3.74" height="4.18" fill="rgb(45,128,232)" fill-opacity="0.76"/><rect x="399.3" y="618.4" width="3.74" height="4.18" fill="rgb(45,128,232)" fill-opacity="0.49"/><rect x="403.0" y="618.4" width="3.74" height="4.18" fill="rgb(45,128,232)" fill-opacity="0.41"/><rect x="406.7" y="618.4" width="3.74" height="4.18" fill="rgb(45,128,232)" fill-opacity="0.67"/><rect x="410.4" y="618.4" width="3.74" height="4.18" fill="rgb(45,128,232)" fill-opacity="0.72"/><rect x="414.1" y="618.4" width="3.74" height="4.18" fill="rgb(45,128,232)" fill-opacity="0.68"/><rect x="417.8" y="618.4" width="3.74" height="4.18" fill="rgb(45,128,232)" fill-opacity="0.64"/><rect x="421.4" y="618.4" width="3.74" height="4.18" fill="rgb(45,128,232)" fill-opacity="0.63"/><rect x="425.1" y="618.4" width="3.74" height="4.18" fill="rgb(45,128,232)" fill-opacity="0.72"/><rect x="428.8" y="618.4" width="3.74" height="4.18" fill="rgb(45,128,232)" fill-opacity="0.24"/><rect x="314.5" y="622.5" width="3.74" height="4.18" fill="rgb(45,128,232)" fill-opacity="0.15"/><rect x="318.2" y="622.5" width="3.74" height="4.18" fill="rgb(45,128,232)" fill-opacity="0.30"/><rect x="321.9" y="622.5" width="3.74" height="4.18" fill="rgb(45,128,232)" fill-opacity="0.33"/><rect x="325.6" y="622.5" width="3.74" height="4.18" fill="rgb(45,128,232)" fill-opacity="0.34"/><rect x="329.2" y="622.5" width="3.74" height="4.18" fill="rgb(45,128,232)" fill-opacity="0.33"/><rect x="332.9" y="622.5" width="3.74" height="4.18" fill="rgb(45,128,232)" fill-opacity="0.26"/><rect x="336.6" y="622.5" width="3.74" height="4.18" fill="rgb(45,128,232)" fill-opacity="0.26"/><rect x="340.3" y="622.5" width="3.74" height="4.18" fill="rgb(45,128,232)" fill-opacity="0.30"/><rect x="344.0" y="622.5" width="3.74" height="4.18" fill="rgb(45,128,232)" fill-opacity="0.27"/><rect x="347.7" y="622.5" width="3.74" height="4.18" fill="rgb(45,128,232)" fill-opacity="0.17"/><rect x="351.4" y="622.5" width="3.74" height="4.18" fill="rgb(45,128,232)" fill-opacity="0.34"/><rect x="355.1" y="622.5" width="3.74" height="4.18" fill="rgb(45,128,232)" fill-opacity="0.20"/><rect x="358.8" y="622.5" width="3.74" height="4.18" fill="rgb(45,128,232)" fill-opacity="0.26"/><rect x="362.4" y="622.5" width="3.74" height="4.18" fill="rgb(45,128,232)" fill-opacity="0.25"/><rect x="366.1" y="622.5" width="3.74" height="4.18" fill="rgb(45,128,232)" fill-opacity="0.18"/><rect x="369.8" y="622.5" width="3.74" height="4.18" fill="rgb(45,128,232)" fill-opacity="0.27"/><rect x="373.5" y="622.5" width="3.74" height="4.18" fill="rgb(45,128,232)" fill-opacity="0.28"/><rect x="377.2" y="622.5" width="3.74" height="4.18" fill="rgb(45,128,232)" fill-opacity="0.32"/><rect x="380.9" y="622.5" width="3.74" height="4.18" fill="rgb(45,128,232)" fill-opacity="0.28"/><rect x="384.6" y="622.5" width="3.74" height="4.18" fill="rgb(45,128,232)" fill-opacity="0.22"/><rect x="388.2" y="622.5" width="3.74" height="4.18" fill="rgb(45,128,232)" fill-opacity="0.27"/><rect x="391.9" y="622.5" width="3.74" height="4.18" fill="rgb(45,128,232)" fill-opacity="0.35"/><rect x="395.6" y="622.5" width="3.74" height="4.18" fill="rgb(45,128,232)" fill-opacity="0.29"/><rect x="399.3" y="622.5" width="3.74" height="4.18" fill="rgb(45,128,232)" fill-opacity="0.33"/><rect x="403.0" y="622.5" width="3.74" height="4.18" fill="rgb(45,128,232)" fill-opacity="0.16"/><rect x="406.7" y="622.5" width="3.74" height="4.18" fill="rgb(45,128,232)" fill-opacity="0.30"/><rect x="410.4" y="622.5" width="3.74" height="4.18" fill="rgb(45,128,232)" fill-opacity="0.20"/><rect x="414.1" y="622.5" width="3.74" height="4.18" fill="rgb(45,128,232)" fill-opacity="0.19"/><rect x="417.8" y="622.5" width="3.74" height="4.18" fill="rgb(45,128,232)" fill-opacity="0.22"/><rect x="421.4" y="622.5" width="3.74" height="4.18" fill="rgb(45,128,232)" fill-opacity="0.19"/><rect x="425.1" y="622.5" width="3.74" height="4.18" fill="rgb(45,128,232)" fill-opacity="0.18"/><rect x="428.8" y="622.5" width="3.74" height="4.18" fill="rgb(45,128,232)" fill-opacity="0.09"/><rect x="536.0" y="614.3" width="3.78" height="4.18" fill="rgb(85,85,85)" fill-opacity="0.06"/><rect x="539.7" y="614.3" width="3.78" height="4.18" fill="rgb(85,85,85)" fill-opacity="0.10"/><rect x="543.5" y="614.3" width="3.78" height="4.18" fill="rgb(85,85,85)" fill-opacity="0.16"/><rect x="547.2" y="614.3" width="3.78" height="4.18" fill="rgb(85,85,85)" fill-opacity="0.10"/><rect x="550.9" y="614.3" width="3.78" height="4.18" fill="rgb(85,85,85)" fill-opacity="0.15"/><rect x="554.7" y="614.3" width="3.78" height="4.18" fill="rgb(85,85,85)" fill-opacity="0.13"/><rect x="558.4" y="614.3" width="3.78" height="4.18" fill="rgb(85,85,85)" fill-opacity="0.18"/><rect x="562.1" y="614.3" width="3.78" height="4.18" fill="rgb(85,85,85)" fill-opacity="0.10"/><rect x="565.8" y="614.3" width="3.78" height="4.18" fill="rgb(85,85,85)" fill-opacity="0.21"/><rect x="573.3" y="614.3" width="3.78" height="4.18" fill="rgb(85,85,85)" fill-opacity="0.09"/><rect x="577.0" y="614.3" width="3.78" height="4.18" fill="rgb(85,85,85)" fill-opacity="0.09"/><rect x="580.8" y="614.3" width="3.78" height="4.18" fill="rgb(85,85,85)" fill-opacity="0.17"/><rect x="584.5" y="614.3" width="3.78" height="4.18" fill="rgb(85,85,85)" fill-opacity="0.21"/><rect x="588.2" y="614.3" width="3.78" height="4.18" fill="rgb(85,85,85)" fill-opacity="0.20"/><rect x="592.0" y="614.3" width="3.78" height="4.18" fill="rgb(85,85,85)" fill-opacity="0.19"/><rect x="595.7" y="614.3" width="3.78" height="4.18" fill="rgb(85,85,85)" fill-opacity="0.10"/><rect x="599.4" y="614.3" width="3.78" height="4.18" fill="rgb(85,85,85)" fill-opacity="0.11"/><rect x="603.2" y="614.3" width="3.78" height="4.18" fill="rgb(85,85,85)" fill-opacity="0.12"/><rect x="606.9" y="614.3" width="3.78" height="4.18" fill="rgb(85,85,85)" fill-opacity="0.12"/><rect x="610.6" y="614.3" width="3.78" height="4.18" fill="rgb(85,85,85)" fill-opacity="0.11"/><rect x="614.3" y="614.3" width="3.78" height="4.18" fill="rgb(85,85,85)" fill-opacity="0.12"/><rect x="618.1" y="614.3" width="3.78" height="4.18" fill="rgb(85,85,85)" fill-opacity="0.13"/><rect x="621.8" y="614.3" width="3.78" height="4.18" fill="rgb(85,85,85)" fill-opacity="0.13"/><rect x="625.5" y="614.3" width="3.78" height="4.18" fill="rgb(85,85,85)" fill-opacity="0.19"/><rect x="629.3" y="614.3" width="3.78" height="4.18" fill="rgb(85,85,85)" fill-opacity="0.09"/><rect x="536.0" y="618.4" width="3.78" height="4.18" fill="rgb(85,85,85)" fill-opacity="0.15"/><rect x="539.7" y="618.4" width="3.78" height="4.18" fill="rgb(85,85,85)" fill-opacity="0.51"/><rect x="543.5" y="618.4" width="3.78" height="4.18" fill="rgb(85,85,85)" fill-opacity="0.60"/><rect x="547.2" y="618.4" width="3.78" height="4.18" fill="rgb(85,85,85)" fill-opacity="0.30"/><rect x="550.9" y="618.4" width="3.78" height="4.18" fill="rgb(85,85,85)" fill-opacity="0.70"/><rect x="554.7" y="618.4" width="3.78" height="4.18" fill="rgb(85,85,85)" fill-opacity="0.53"/><rect x="558.4" y="618.4" width="3.78" height="4.18" fill="rgb(85,85,85)" fill-opacity="0.48"/><rect x="562.1" y="618.4" width="3.78" height="4.18" fill="rgb(85,85,85)" fill-opacity="0.46"/><rect x="565.8" y="618.4" width="3.78" height="4.18" fill="rgb(85,85,85)" fill-opacity="0.68"/><rect x="573.3" y="618.4" width="3.78" height="4.18" fill="rgb(85,85,85)" fill-opacity="0.51"/><rect x="577.0" y="618.4" width="3.78" height="4.18" fill="rgb(85,85,85)" fill-opacity="0.47"/><rect x="580.8" y="618.4" width="3.78" height="4.18" fill="rgb(85,85,85)" fill-opacity="0.70"/><rect x="584.5" y="618.4" width="3.78" height="4.18" fill="rgb(85,85,85)" fill-opacity="0.36"/><rect x="588.2" y="618.4" width="3.78" height="4.18" fill="rgb(85,85,85)" fill-opacity="0.48"/><rect x="592.0" y="618.4" width="3.78" height="4.18" fill="rgb(85,85,85)" fill-opacity="0.69"/><rect x="595.7" y="618.4" width="3.78" height="4.18" fill="rgb(85,85,85)" fill-opacity="0.65"/><rect x="599.4" y="618.4" width="3.78" height="4.18" fill="rgb(85,85,85)" fill-opacity="0.62"/><rect x="603.2" y="618.4" width="3.78" height="4.18" fill="rgb(85,85,85)" fill-opacity="0.66"/><rect x="606.9" y="618.4" width="3.78" height="4.18" fill="rgb(85,85,85)" fill-opacity="0.35"/><rect x="610.6" y="618.4" width="3.78" height="4.18" fill="rgb(85,85,85)" fill-opacity="0.58"/><rect x="614.3" y="618.4" width="3.78" height="4.18" fill="rgb(85,85,85)" fill-opacity="0.50"/><rect x="618.1" y="618.4" width="3.78" height="4.18" fill="rgb(85,85,85)" fill-opacity="0.72"/><rect x="621.8" y="618.4" width="3.78" height="4.18" fill="rgb(85,85,85)" fill-opacity="0.71"/><rect x="625.5" y="618.4" width="3.78" height="4.18" fill="rgb(85,85,85)" fill-opacity="0.45"/><rect x="629.3" y="618.4" width="3.78" height="4.18" fill="rgb(85,85,85)" fill-opacity="0.29"/><rect x="536.0" y="622.5" width="3.78" height="4.18" fill="rgb(85,85,85)" fill-opacity="0.06"/><rect x="539.7" y="622.5" width="3.78" height="4.18" fill="rgb(85,85,85)" fill-opacity="0.15"/><rect x="543.5" y="622.5" width="3.78" height="4.18" fill="rgb(85,85,85)" fill-opacity="0.19"/><rect x="547.2" y="622.5" width="3.78" height="4.18" fill="rgb(85,85,85)" fill-opacity="0.21"/><rect x="550.9" y="622.5" width="3.78" height="4.18" fill="rgb(85,85,85)" fill-opacity="0.20"/><rect x="554.7" y="622.5" width="3.78" height="4.18" fill="rgb(85,85,85)" fill-opacity="0.12"/><rect x="558.4" y="622.5" width="3.78" height="4.18" fill="rgb(85,85,85)" fill-opacity="0.10"/><rect x="562.1" y="622.5" width="3.78" height="4.18" fill="rgb(85,85,85)" fill-opacity="0.22"/><rect x="565.8" y="622.5" width="3.78" height="4.18" fill="rgb(85,85,85)" fill-opacity="0.17"/><rect x="573.3" y="622.5" width="3.78" height="4.18" fill="rgb(85,85,85)" fill-opacity="0.17"/><rect x="577.0" y="622.5" width="3.78" height="4.18" fill="rgb(85,85,85)" fill-opacity="0.19"/><rect x="580.8" y="622.5" width="3.78" height="4.18" fill="rgb(85,85,85)" fill-opacity="0.22"/><rect x="584.5" y="622.5" width="3.78" height="4.18" fill="rgb(85,85,85)" fill-opacity="0.19"/><rect x="588.2" y="622.5" width="3.78" height="4.18" fill="rgb(85,85,85)" fill-opacity="0.18"/><rect x="592.0" y="622.5" width="3.78" height="4.18" fill="rgb(85,85,85)" fill-opacity="0.15"/><rect x="595.7" y="622.5" width="3.78" height="4.18" fill="rgb(85,85,85)" fill-opacity="0.19"/><rect x="599.4" y="622.5" width="3.78" height="4.18" fill="rgb(85,85,85)" fill-opacity="0.19"/><rect x="603.2" y="622.5" width="3.78" height="4.18" fill="rgb(85,85,85)" fill-opacity="0.17"/><rect x="606.9" y="622.5" width="3.78" height="4.18" fill="rgb(85,85,85)" fill-opacity="0.23"/><rect x="610.6" y="622.5" width="3.78" height="4.18" fill="rgb(85,85,85)" fill-opacity="0.14"/><rect x="614.3" y="622.5" width="3.78" height="4.18" fill="rgb(85,85,85)" fill-opacity="0.22"/><rect x="618.1" y="622.5" width="3.78" height="4.18" fill="rgb(85,85,85)" fill-opacity="0.23"/><rect x="621.8" y="622.5" width="3.78" height="4.18" fill="rgb(85,85,85)" fill-opacity="0.19"/><rect x="625.5" y="622.5" width="3.78" height="4.18" fill="rgb(85,85,85)" fill-opacity="0.15"/><rect x="629.3" y="622.5" width="3.78" height="4.18" fill="rgb(85,85,85)" fill-opacity="0.07"/><rect x="314.5" y="651.0" width="3.74" height="4.18" fill="rgb(45,128,232)" fill-opacity="0.15"/><rect x="318.2" y="651.0" width="3.74" height="4.18" fill="rgb(45,128,232)" fill-opacity="0.23"/><rect x="321.9" y="651.0" width="3.74" height="4.18" fill="rgb(45,128,232)" fill-opacity="0.32"/><rect x="325.6" y="651.0" width="3.74" height="4.18" fill="rgb(45,128,232)" fill-opacity="0.35"/><rect x="329.2" y="651.0" width="3.74" height="4.18" fill="rgb(45,128,232)" fill-opacity="0.22"/><rect x="332.9" y="651.0" width="3.74" height="4.18" fill="rgb(45,128,232)" fill-opacity="0.31"/><rect x="336.6" y="651.0" width="3.74" height="4.18" fill="rgb(45,128,232)" fill-opacity="0.23"/><rect x="340.3" y="651.0" width="3.74" height="4.18" fill="rgb(45,128,232)" fill-opacity="0.19"/><rect x="344.0" y="651.0" width="3.74" height="4.18" fill="rgb(45,128,232)" fill-opacity="0.23"/><rect x="347.7" y="651.0" width="3.74" height="4.18" fill="rgb(45,128,232)" fill-opacity="0.31"/><rect x="351.4" y="651.0" width="3.74" height="4.18" fill="rgb(45,128,232)" fill-opacity="0.19"/><rect x="355.1" y="651.0" width="3.74" height="4.18" fill="rgb(45,128,232)" fill-opacity="0.29"/><rect x="358.8" y="651.0" width="3.74" height="4.18" fill="rgb(45,128,232)" fill-opacity="0.23"/><rect x="362.4" y="651.0" width="3.74" height="4.18" fill="rgb(45,128,232)" fill-opacity="0.19"/><rect x="366.1" y="651.0" width="3.74" height="4.18" fill="rgb(45,128,232)" fill-opacity="0.24"/><rect x="369.8" y="651.0" width="3.74" height="4.18" fill="rgb(45,128,232)" fill-opacity="0.24"/><rect x="373.5" y="651.0" width="3.74" height="4.18" fill="rgb(45,128,232)" fill-opacity="0.25"/><rect x="377.2" y="651.0" width="3.74" height="4.18" fill="rgb(45,128,232)" fill-opacity="0.33"/><rect x="380.9" y="651.0" width="3.74" height="4.18" fill="rgb(45,128,232)" fill-opacity="0.34"/><rect x="384.6" y="651.0" width="3.74" height="4.18" fill="rgb(45,128,232)" fill-opacity="0.20"/><rect x="388.2" y="651.0" width="3.74" height="4.18" fill="rgb(45,128,232)" fill-opacity="0.35"/><rect x="391.9" y="651.0" width="3.74" height="4.18" fill="rgb(45,128,232)" fill-opacity="0.28"/><rect x="395.6" y="651.0" width="3.74" height="4.18" fill="rgb(45,128,232)" fill-opacity="0.35"/><rect x="399.3" y="651.0" width="3.74" height="4.18" fill="rgb(45,128,232)" fill-opacity="0.32"/><rect x="403.0" y="651.0" width="3.74" height="4.18" fill="rgb(45,128,232)" fill-opacity="0.26"/><rect x="406.7" y="651.0" width="3.74" height="4.18" fill="rgb(45,128,232)" fill-opacity="0.21"/><rect x="410.4" y="651.0" width="3.74" height="4.18" fill="rgb(45,128,232)" fill-opacity="0.34"/><rect x="414.1" y="651.0" width="3.74" height="4.18" fill="rgb(45,128,232)" fill-opacity="0.36"/><rect x="417.8" y="651.0" width="3.74" height="4.18" fill="rgb(45,128,232)" fill-opacity="0.28"/><rect x="421.4" y="651.0" width="3.74" height="4.18" fill="rgb(45,128,232)" fill-opacity="0.18"/><rect x="425.1" y="651.0" width="3.74" height="4.18" fill="rgb(45,128,232)" fill-opacity="0.32"/><rect x="428.8" y="651.0" width="3.74" height="4.18" fill="rgb(45,128,232)" fill-opacity="0.14"/><rect x="314.5" y="655.2" width="3.74" height="4.18" fill="rgb(45,128,232)" fill-opacity="0.36"/><rect x="318.2" y="655.2" width="3.74" height="4.18" fill="rgb(45,128,232)" fill-opacity="0.84"/><rect x="321.9" y="655.2" width="3.74" height="4.18" fill="rgb(45,128,232)" fill-opacity="0.84"/><rect x="325.6" y="655.2" width="3.74" height="4.18" fill="rgb(45,128,232)" fill-opacity="0.73"/><rect x="329.2" y="655.2" width="3.74" height="4.18" fill="rgb(45,128,232)" fill-opacity="0.56"/><rect x="332.9" y="655.2" width="3.74" height="4.18" fill="rgb(45,128,232)" fill-opacity="0.63"/><rect x="336.6" y="655.2" width="3.74" height="4.18" fill="rgb(45,128,232)" fill-opacity="0.62"/><rect x="340.3" y="655.2" width="3.74" height="4.18" fill="rgb(45,128,232)" fill-opacity="0.74"/><rect x="344.0" y="655.2" width="3.74" height="4.18" fill="rgb(45,128,232)" fill-opacity="0.67"/><rect x="347.7" y="655.2" width="3.74" height="4.18" fill="rgb(45,128,232)" fill-opacity="0.77"/><rect x="351.4" y="655.2" width="3.74" height="4.18" fill="rgb(45,128,232)" fill-opacity="0.62"/><rect x="355.1" y="655.2" width="3.74" height="4.18" fill="rgb(45,128,232)" fill-opacity="0.66"/><rect x="358.8" y="655.2" width="3.74" height="4.18" fill="rgb(45,128,232)" fill-opacity="0.83"/><rect x="362.4" y="655.2" width="3.74" height="4.18" fill="rgb(45,128,232)" fill-opacity="0.75"/><rect x="366.1" y="655.2" width="3.74" height="4.18" fill="rgb(45,128,232)" fill-opacity="0.82"/><rect x="369.8" y="655.2" width="3.74" height="4.18" fill="rgb(45,128,232)" fill-opacity="0.71"/><rect x="373.5" y="655.2" width="3.74" height="4.18" fill="rgb(45,128,232)" fill-opacity="0.44"/><rect x="377.2" y="655.2" width="3.74" height="4.18" fill="rgb(45,128,232)" fill-opacity="0.58"/><rect x="380.9" y="655.2" width="3.74" height="4.18" fill="rgb(45,128,232)" fill-opacity="0.52"/><rect x="384.6" y="655.2" width="3.74" height="4.18" fill="rgb(45,128,232)" fill-opacity="0.50"/><rect x="388.2" y="655.2" width="3.74" height="4.18" fill="rgb(45,128,232)" fill-opacity="0.44"/><rect x="391.9" y="655.2" width="3.74" height="4.18" fill="rgb(45,128,232)" fill-opacity="0.43"/><rect x="395.6" y="655.2" width="3.74" height="4.18" fill="rgb(45,128,232)" fill-opacity="0.61"/><rect x="399.3" y="655.2" width="3.74" height="4.18" fill="rgb(45,128,232)" fill-opacity="0.75"/><rect x="403.0" y="655.2" width="3.74" height="4.18" fill="rgb(45,128,232)" fill-opacity="0.79"/><rect x="406.7" y="655.2" width="3.74" height="4.18" fill="rgb(45,128,232)" fill-opacity="0.83"/><rect x="410.4" y="655.2" width="3.74" height="4.18" fill="rgb(45,128,232)" fill-opacity="0.65"/><rect x="414.1" y="655.2" width="3.74" height="4.18" fill="rgb(45,128,232)" fill-opacity="0.39"/><rect x="417.8" y="655.2" width="3.74" height="4.18" fill="rgb(45,128,232)" fill-opacity="0.47"/><rect x="421.4" y="655.2" width="3.74" height="4.18" fill="rgb(45,128,232)" fill-opacity="0.41"/><rect x="425.1" y="655.2" width="3.74" height="4.18" fill="rgb(45,128,232)" fill-opacity="0.79"/><rect x="428.8" y="655.2" width="3.74" height="4.18" fill="rgb(45,128,232)" fill-opacity="0.24"/><rect x="314.5" y="659.3" width="3.74" height="4.18" fill="rgb(45,128,232)" fill-opacity="0.14"/><rect x="318.2" y="659.3" width="3.74" height="4.18" fill="rgb(45,128,232)" fill-opacity="0.25"/><rect x="321.9" y="659.3" width="3.74" height="4.18" fill="rgb(45,128,232)" fill-opacity="0.27"/><rect x="325.6" y="659.3" width="3.74" height="4.18" fill="rgb(45,128,232)" fill-opacity="0.33"/><rect x="329.2" y="659.3" width="3.74" height="4.18" fill="rgb(45,128,232)" fill-opacity="0.29"/><rect x="332.9" y="659.3" width="3.74" height="4.18" fill="rgb(45,128,232)" fill-opacity="0.17"/><rect x="336.6" y="659.3" width="3.74" height="4.18" fill="rgb(45,128,232)" fill-opacity="0.28"/><rect x="340.3" y="659.3" width="3.74" height="4.18" fill="rgb(45,128,232)" fill-opacity="0.23"/><rect x="344.0" y="659.3" width="3.74" height="4.18" fill="rgb(45,128,232)" fill-opacity="0.35"/><rect x="347.7" y="659.3" width="3.74" height="4.18" fill="rgb(45,128,232)" fill-opacity="0.21"/><rect x="351.4" y="659.3" width="3.74" height="4.18" fill="rgb(45,128,232)" fill-opacity="0.21"/><rect x="355.1" y="659.3" width="3.74" height="4.18" fill="rgb(45,128,232)" fill-opacity="0.34"/><rect x="358.8" y="659.3" width="3.74" height="4.18" fill="rgb(45,128,232)" fill-opacity="0.24"/><rect x="362.4" y="659.3" width="3.74" height="4.18" fill="rgb(45,128,232)" fill-opacity="0.18"/><rect x="366.1" y="659.3" width="3.74" height="4.18" fill="rgb(45,128,232)" fill-opacity="0.32"/><rect x="369.8" y="659.3" width="3.74" height="4.18" fill="rgb(45,128,232)" fill-opacity="0.34"/><rect x="373.5" y="659.3" width="3.74" height="4.18" fill="rgb(45,128,232)" fill-opacity="0.26"/><rect x="377.2" y="659.3" width="3.74" height="4.18" fill="rgb(45,128,232)" fill-opacity="0.19"/><rect x="380.9" y="659.3" width="3.74" height="4.18" fill="rgb(45,128,232)" fill-opacity="0.33"/><rect x="384.6" y="659.3" width="3.74" height="4.18" fill="rgb(45,128,232)" fill-opacity="0.23"/><rect x="388.2" y="659.3" width="3.74" height="4.18" fill="rgb(45,128,232)" fill-opacity="0.21"/><rect x="391.9" y="659.3" width="3.74" height="4.18" fill="rgb(45,128,232)" fill-opacity="0.17"/><rect x="395.6" y="659.3" width="3.74" height="4.18" fill="rgb(45,128,232)" fill-opacity="0.33"/><rect x="399.3" y="659.3" width="3.74" height="4.18" fill="rgb(45,128,232)" fill-opacity="0.21"/><rect x="403.0" y="659.3" width="3.74" height="4.18" fill="rgb(45,128,232)" fill-opacity="0.18"/><rect x="406.7" y="659.3" width="3.74" height="4.18" fill="rgb(45,128,232)" fill-opacity="0.23"/><rect x="410.4" y="659.3" width="3.74" height="4.18" fill="rgb(45,128,232)" fill-opacity="0.30"/><rect x="414.1" y="659.3" width="3.74" height="4.18" fill="rgb(45,128,232)" fill-opacity="0.36"/><rect x="417.8" y="659.3" width="3.74" height="4.18" fill="rgb(45,128,232)" fill-opacity="0.20"/><rect x="421.4" y="659.3" width="3.74" height="4.18" fill="rgb(45,128,232)" fill-opacity="0.28"/><rect x="425.1" y="659.3" width="3.74" height="4.18" fill="rgb(45,128,232)" fill-opacity="0.21"/><rect x="428.8" y="659.3" width="3.74" height="4.18" fill="rgb(45,128,232)" fill-opacity="0.15"/><rect x="536.0" y="651.0" width="3.78" height="4.18" fill="rgb(85,85,85)" fill-opacity="0.06"/><rect x="539.7" y="651.0" width="3.78" height="4.18" fill="rgb(85,85,85)" fill-opacity="0.18"/><rect x="543.5" y="651.0" width="3.78" height="4.18" fill="rgb(85,85,85)" fill-opacity="0.15"/><rect x="547.2" y="651.0" width="3.78" height="4.18" fill="rgb(85,85,85)" fill-opacity="0.15"/><rect x="550.9" y="651.0" width="3.78" height="4.18" fill="rgb(85,85,85)" fill-opacity="0.19"/><rect x="554.7" y="651.0" width="3.78" height="4.18" fill="rgb(85,85,85)" fill-opacity="0.11"/><rect x="558.4" y="651.0" width="3.78" height="4.18" fill="rgb(85,85,85)" fill-opacity="0.21"/><rect x="562.1" y="651.0" width="3.78" height="4.18" fill="rgb(85,85,85)" fill-opacity="0.15"/><rect x="565.8" y="651.0" width="3.78" height="4.18" fill="rgb(85,85,85)" fill-opacity="0.10"/><rect x="573.3" y="651.0" width="3.78" height="4.18" fill="rgb(85,85,85)" fill-opacity="0.18"/><rect x="577.0" y="651.0" width="3.78" height="4.18" fill="rgb(85,85,85)" fill-opacity="0.11"/><rect x="580.8" y="651.0" width="3.78" height="4.18" fill="rgb(85,85,85)" fill-opacity="0.21"/><rect x="584.5" y="651.0" width="3.78" height="4.18" fill="rgb(85,85,85)" fill-opacity="0.17"/><rect x="588.2" y="651.0" width="3.78" height="4.18" fill="rgb(85,85,85)" fill-opacity="0.11"/><rect x="592.0" y="651.0" width="3.78" height="4.18" fill="rgb(85,85,85)" fill-opacity="0.21"/><rect x="595.7" y="651.0" width="3.78" height="4.18" fill="rgb(85,85,85)" fill-opacity="0.13"/><rect x="599.4" y="651.0" width="3.78" height="4.18" fill="rgb(85,85,85)" fill-opacity="0.21"/><rect x="603.2" y="651.0" width="3.78" height="4.18" fill="rgb(85,85,85)" fill-opacity="0.08"/><rect x="606.9" y="651.0" width="3.78" height="4.18" fill="rgb(85,85,85)" fill-opacity="0.12"/><rect x="610.6" y="651.0" width="3.78" height="4.18" fill="rgb(85,85,85)" fill-opacity="0.17"/><rect x="614.3" y="651.0" width="3.78" height="4.18" fill="rgb(85,85,85)" fill-opacity="0.12"/><rect x="618.1" y="651.0" width="3.78" height="4.18" fill="rgb(85,85,85)" fill-opacity="0.13"/><rect x="621.8" y="651.0" width="3.78" height="4.18" fill="rgb(85,85,85)" fill-opacity="0.10"/><rect x="625.5" y="651.0" width="3.78" height="4.18" fill="rgb(85,85,85)" fill-opacity="0.16"/><rect x="629.3" y="651.0" width="3.78" height="4.18" fill="rgb(85,85,85)" fill-opacity="0.09"/><rect x="536.0" y="655.2" width="3.78" height="4.18" fill="rgb(85,85,85)" fill-opacity="0.19"/><rect x="539.7" y="655.2" width="3.78" height="4.18" fill="rgb(85,85,85)" fill-opacity="0.58"/><rect x="543.5" y="655.2" width="3.78" height="4.18" fill="rgb(85,85,85)" fill-opacity="0.51"/><rect x="547.2" y="655.2" width="3.78" height="4.18" fill="rgb(85,85,85)" fill-opacity="0.59"/><rect x="550.9" y="655.2" width="3.78" height="4.18" fill="rgb(85,85,85)" fill-opacity="0.72"/><rect x="554.7" y="655.2" width="3.78" height="4.18" fill="rgb(85,85,85)" fill-opacity="0.52"/><rect x="558.4" y="655.2" width="3.78" height="4.18" fill="rgb(85,85,85)" fill-opacity="0.44"/><rect x="562.1" y="655.2" width="3.78" height="4.18" fill="rgb(85,85,85)" fill-opacity="0.49"/><rect x="565.8" y="655.2" width="3.78" height="4.18" fill="rgb(85,85,85)" fill-opacity="0.59"/><rect x="573.3" y="655.2" width="3.78" height="4.18" fill="rgb(85,85,85)" fill-opacity="0.72"/><rect x="577.0" y="655.2" width="3.78" height="4.18" fill="rgb(85,85,85)" fill-opacity="0.71"/><rect x="580.8" y="655.2" width="3.78" height="4.18" fill="rgb(85,85,85)" fill-opacity="0.41"/><rect x="584.5" y="655.2" width="3.78" height="4.18" fill="rgb(85,85,85)" fill-opacity="0.32"/><rect x="588.2" y="655.2" width="3.78" height="4.18" fill="rgb(85,85,85)" fill-opacity="0.70"/><rect x="592.0" y="655.2" width="3.78" height="4.18" fill="rgb(85,85,85)" fill-opacity="0.37"/><rect x="595.7" y="655.2" width="3.78" height="4.18" fill="rgb(85,85,85)" fill-opacity="0.58"/><rect x="599.4" y="655.2" width="3.78" height="4.18" fill="rgb(85,85,85)" fill-opacity="0.34"/><rect x="603.2" y="655.2" width="3.78" height="4.18" fill="rgb(85,85,85)" fill-opacity="0.50"/><rect x="606.9" y="655.2" width="3.78" height="4.18" fill="rgb(85,85,85)" fill-opacity="0.60"/><rect x="610.6" y="655.2" width="3.78" height="4.18" fill="rgb(85,85,85)" fill-opacity="0.70"/><rect x="614.3" y="655.2" width="3.78" height="4.18" fill="rgb(85,85,85)" fill-opacity="0.44"/><rect x="618.1" y="655.2" width="3.78" height="4.18" fill="rgb(85,85,85)" fill-opacity="0.47"/><rect x="621.8" y="655.2" width="3.78" height="4.18" fill="rgb(85,85,85)" fill-opacity="0.63"/><rect x="625.5" y="655.2" width="3.78" height="4.18" fill="rgb(85,85,85)" fill-opacity="0.51"/><rect x="629.3" y="655.2" width="3.78" height="4.18" fill="rgb(85,85,85)" fill-opacity="0.15"/><rect x="536.0" y="659.3" width="3.78" height="4.18" fill="rgb(85,85,85)" fill-opacity="0.06"/><rect x="539.7" y="659.3" width="3.78" height="4.18" fill="rgb(85,85,85)" fill-opacity="0.12"/><rect x="543.5" y="659.3" width="3.78" height="4.18" fill="rgb(85,85,85)" fill-opacity="0.20"/><rect x="547.2" y="659.3" width="3.78" height="4.18" fill="rgb(85,85,85)" fill-opacity="0.18"/><rect x="550.9" y="659.3" width="3.78" height="4.18" fill="rgb(85,85,85)" fill-opacity="0.10"/><rect x="554.7" y="659.3" width="3.78" height="4.18" fill="rgb(85,85,85)" fill-opacity="0.16"/><rect x="558.4" y="659.3" width="3.78" height="4.18" fill="rgb(85,85,85)" fill-opacity="0.20"/><rect x="562.1" y="659.3" width="3.78" height="4.18" fill="rgb(85,85,85)" fill-opacity="0.21"/><rect x="565.8" y="659.3" width="3.78" height="4.18" fill="rgb(85,85,85)" fill-opacity="0.19"/><rect x="573.3" y="659.3" width="3.78" height="4.18" fill="rgb(85,85,85)" fill-opacity="0.17"/><rect x="577.0" y="659.3" width="3.78" height="4.18" fill="rgb(85,85,85)" fill-opacity="0.16"/><rect x="580.8" y="659.3" width="3.78" height="4.18" fill="rgb(85,85,85)" fill-opacity="0.22"/><rect x="584.5" y="659.3" width="3.78" height="4.18" fill="rgb(85,85,85)" fill-opacity="0.16"/><rect x="588.2" y="659.3" width="3.78" height="4.18" fill="rgb(85,85,85)" fill-opacity="0.13"/><rect x="592.0" y="659.3" width="3.78" height="4.18" fill="rgb(85,85,85)" fill-opacity="0.13"/><rect x="595.7" y="659.3" width="3.78" height="4.18" fill="rgb(85,85,85)" fill-opacity="0.14"/><rect x="599.4" y="659.3" width="3.78" height="4.18" fill="rgb(85,85,85)" fill-opacity="0.15"/><rect x="603.2" y="659.3" width="3.78" height="4.18" fill="rgb(85,85,85)" fill-opacity="0.13"/><rect x="606.9" y="659.3" width="3.78" height="4.18" fill="rgb(85,85,85)" fill-opacity="0.14"/><rect x="610.6" y="659.3" width="3.78" height="4.18" fill="rgb(85,85,85)" fill-opacity="0.21"/><rect x="614.3" y="659.3" width="3.78" height="4.18" fill="rgb(85,85,85)" fill-opacity="0.11"/><rect x="618.1" y="659.3" width="3.78" height="4.18" fill="rgb(85,85,85)" fill-opacity="0.11"/><rect x="621.8" y="659.3" width="3.78" height="4.18" fill="rgb(85,85,85)" fill-opacity="0.12"/><rect x="625.5" y="659.3" width="3.78" height="4.18" fill="rgb(85,85,85)" fill-opacity="0.11"/><rect x="629.3" y="659.3" width="3.78" height="4.18" fill="rgb(85,85,85)" fill-opacity="0.10"/></svg>
</body>
</html>
